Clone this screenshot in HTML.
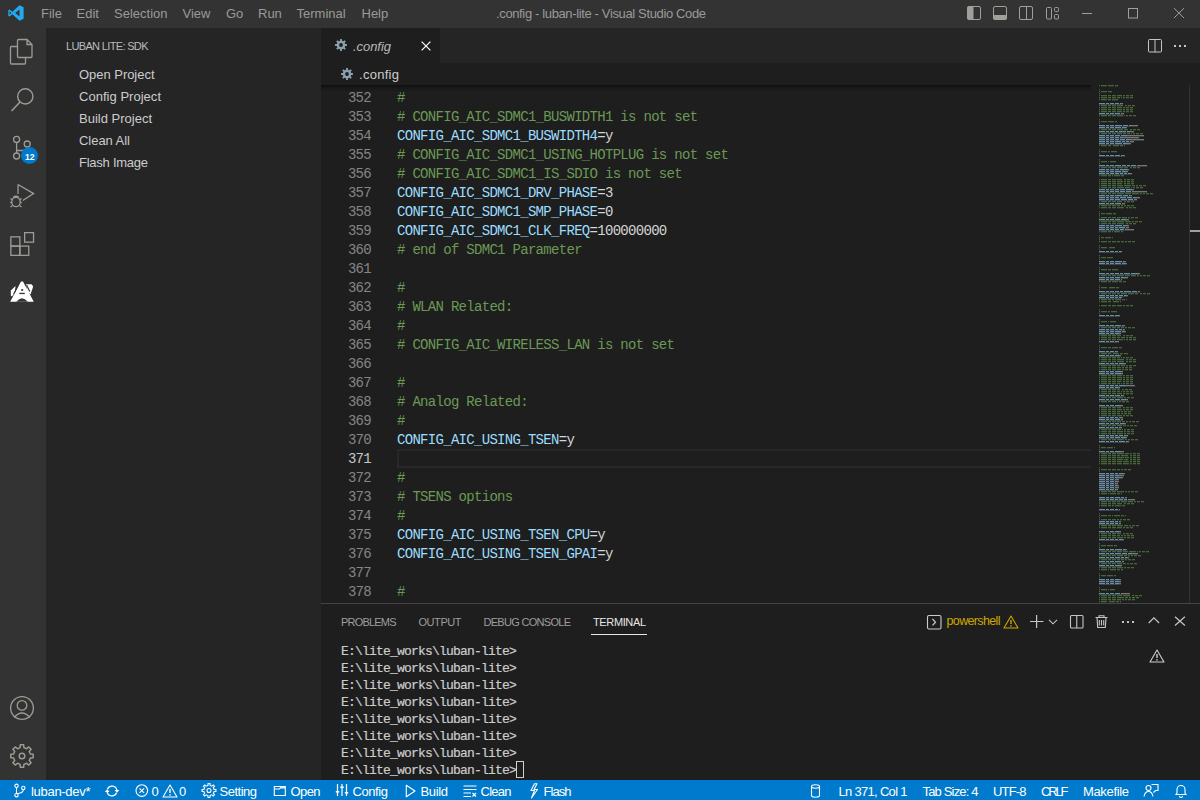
<!DOCTYPE html>
<html><head><meta charset="utf-8">
<style>
*{margin:0;padding:0;box-sizing:border-box}
html,body{width:1200px;height:800px;overflow:hidden;background:#1e1e1e;font-family:"Liberation Sans",sans-serif}
.abs{position:absolute}
.t{position:absolute;white-space:pre;line-height:1}
svg{position:absolute;overflow:visible}
.ln{position:absolute;left:0;width:50px;text-align:right;font-family:"Liberation Mono",monospace;font-size:14px;line-height:19px;color:#858585;letter-spacing:-0.7px}
.code{position:absolute;left:76px;font-family:"Liberation Mono",monospace;font-size:14px;line-height:19px;color:#d4d4d4;letter-spacing:-0.7px;white-space:pre}
.c{color:#6a9955}.k{color:#9cdcfe}
.term{position:absolute;left:20px;font-family:"Liberation Mono",monospace;font-size:13px;line-height:17px;color:#cccccc;letter-spacing:-0.8px;white-space:pre;-webkit-text-stroke:0.2px #cccccc}
</style></head><body>
<div class="abs" style="left:0;top:0;width:1200px;height:28px;background:#333333"></div>
<div class="abs" style="left:0;top:28px;width:46px;height:752px;background:#333333"></div>
<div class="abs" style="left:46px;top:28px;width:275px;height:752px;background:#252526"></div>
<div class="abs" style="left:321px;top:28px;width:879px;height:35px;background:#252526"></div>
<div class="abs" style="left:321px;top:28px;width:119px;height:35px;background:#1e1e1e"></div>
<div class="abs" style="left:0;top:780px;width:1200px;height:20px;background:#007acc"></div>
<svg style="left:8px;top:5px" width="16" height="16" viewBox="0 0 16 16">
<path d="M11.5 0.3 L15.6 2.2 V13.8 L11.5 15.7 L4.4 9.3 L1.6 11.4 L0.3 10.7 V5.3 L1.6 4.6 L4.4 6.7 Z M11.5 4.4 L7.2 8 L11.5 11.6 Z M1.6 6.3 V9.7 L3.4 8 Z" fill="#23a9f2" fill-rule="evenodd"/>
</svg>
<div id="m_File" class="t" style="left:41px;top:7px;font-size:13px;color:#9a9a9a;font-family:'Liberation Sans',sans-serif;letter-spacing:0.000px;">File</div>
<div id="m_Edit" class="t" style="left:76.5px;top:7px;font-size:13px;color:#9a9a9a;font-family:'Liberation Sans',sans-serif;letter-spacing:0.000px;">Edit</div>
<div id="m_Selection" class="t" style="left:114px;top:7px;font-size:13px;color:#9a9a9a;font-family:'Liberation Sans',sans-serif;letter-spacing:0.000px;">Selection</div>
<div id="m_View" class="t" style="left:182.5px;top:7px;font-size:13px;color:#9a9a9a;font-family:'Liberation Sans',sans-serif;letter-spacing:0.000px;">View</div>
<div id="m_Go" class="t" style="left:226px;top:7px;font-size:13px;color:#9a9a9a;font-family:'Liberation Sans',sans-serif;letter-spacing:0.000px;">Go</div>
<div id="m_Run" class="t" style="left:258px;top:7px;font-size:13px;color:#9a9a9a;font-family:'Liberation Sans',sans-serif;letter-spacing:0.000px;">Run</div>
<div id="m_Terminal" class="t" style="left:296.5px;top:7px;font-size:13px;color:#9a9a9a;font-family:'Liberation Sans',sans-serif;letter-spacing:0.000px;">Terminal</div>
<div id="m_Help" class="t" style="left:361.5px;top:7px;font-size:13px;color:#9a9a9a;font-family:'Liberation Sans',sans-serif;letter-spacing:0.000px;">Help</div>
<div id="title" class="t" style="left:496px;top:7px;font-size:13px;color:#9a9a9a;font-family:'Liberation Sans',sans-serif;letter-spacing:-0.362px;">.config - luban-lite - Visual Studio Code</div>
<svg style="left:966px;top:6px" width="16" height="15" viewBox="0 0 16 15">
<rect x="1.5" y="0.5" width="13" height="13" rx="1.5" fill="none" stroke="#a0a09a" stroke-width="1"/>
<rect x="1.5" y="0.5" width="6" height="13" fill="#a0a09a"/>
</svg>
<svg style="left:992px;top:6px" width="16" height="15" viewBox="0 0 16 15">
<rect x="1.5" y="0.5" width="13" height="13" rx="1.5" fill="none" stroke="#a0a09a" stroke-width="1"/>
<rect x="1.5" y="9" width="13" height="4.5" fill="#a0a09a"/>
</svg>
<svg style="left:1018px;top:6px" width="16" height="15" viewBox="0 0 16 15">
<rect x="1.5" y="0.5" width="13" height="13" rx="1.5" fill="none" stroke="#a0a09a" stroke-width="1"/>
<line x1="8.5" y1="0.5" x2="8.5" y2="13.5" stroke="#a0a09a" stroke-width="1"/>
</svg>
<svg style="left:1044px;top:6px" width="16" height="15" viewBox="0 0 16 15">
<rect x="2.5" y="1.5" width="5" height="11.5" rx="1" fill="none" stroke="#a0a09a" stroke-width="1"/>
<rect x="10.5" y="1.5" width="4" height="4" rx="1" fill="none" stroke="#a0a09a" stroke-width="1"/>
<rect x="10.5" y="8.5" width="4" height="4.5" rx="1" fill="none" stroke="#a0a09a" stroke-width="1"/>
</svg>
<svg style="left:1080px;top:8px" width="14" height="12" viewBox="0 0 14 12">
<line x1="2" y1="5.5" x2="12" y2="5.5" stroke="#a0a09a" stroke-width="1"/>
</svg>
<svg style="left:1127px;top:7px" width="12" height="12" viewBox="0 0 12 12">
<rect x="1.5" y="1.5" width="9" height="9.5" fill="none" stroke="#a0a09a" stroke-width="1"/>
</svg>
<svg style="left:1173px;top:7px" width="12" height="12" viewBox="0 0 12 12">
<path d="M1 1.2 L11 11 M11 1.2 L1 11" stroke="#a0a09a" stroke-width="1"/>
</svg>
<svg style="left:0;top:28px" width="46" height="752" viewBox="0 0 46 752">
<g fill="none" stroke="#9c9c94" stroke-width="1.3">
<path d="M17 18.5 H11.5 a1 1 0 0 0 -1 1 V35 a1 1 0 0 0 1 1 H24.5 a1 1 0 0 0 1 -1 V29.5"/>
<path d="M17.5 12.5 a1 1 0 0 1 1 -1 H27 L32 16.5 V28.5 a1 1 0 0 1 -1 1 H18.5 a1 1 0 0 1 -1 -1 Z M27 11.5 V16.5 H32"/>
<circle cx="25.3" cy="68.4" r="7.6" stroke-width="1.4"/>
<path d="M20 74 L11.5 83" stroke-width="1.6"/>
<circle cx="16.6" cy="111.4" r="3"/>
<circle cx="27.2" cy="116" r="3"/>
<circle cx="16.6" cy="128" r="3"/>
<path d="M16.6 114.4 V125 M27.2 119 q0 3.5 -4 3.5 H16.6"/>
<path d="M18 156.5 L33.6 165.6 L22.8 172.5 M18 156.5 V166"/>
<ellipse cx="16" cy="174" rx="4.2" ry="4.6"/><path d="M13 169.5 q3 -2.5 6 0 M10.5 170.5 l2 1.5 M21.5 170.5 l-2 1.5 M10.2 174.5 h1.6 M20.2 174.5 h1.6 M10.5 179 l2 -1.5 M21.5 179 l-2 -1.5"/>
<rect x="10.85" y="208.85" width="9" height="9.25"/>
<rect x="10.85" y="218.1" width="9" height="9.25"/>
<rect x="19.85" y="218.1" width="8.9" height="9.25"/>
<rect x="24.65" y="204.65" width="8.9" height="9.5"/>
<circle cx="22" cy="680" r="11.4"/>
<circle cx="22" cy="677.4" r="4.8"/>
<path d="M14 689.5 q8 -9 16 0"/>
</g>
</svg>
<svg style="left:0;top:728px" width="46" height="52" viewBox="0 0 46 52">
<path d="M30.38 26.07 L33.18 26.34 L33.18 29.66 L30.38 29.93 L29.29 32.57 L31.08 34.73 L28.73 37.08 L26.57 35.29 L23.93 36.38 L23.66 39.18 L20.34 39.18 L20.07 36.38 L17.43 35.29 L15.27 37.08 L12.92 34.73 L14.71 32.57 L13.62 29.93 L10.82 29.66 L10.82 26.34 L13.62 26.07 L14.71 23.43 L12.92 21.27 L15.27 18.92 L17.43 20.71 L20.07 19.62 L20.34 16.82 L23.66 16.82 L23.93 19.62 L26.57 20.71 L28.73 18.92 L31.08 21.27 L29.29 23.43 Z" fill="none" stroke="#9c9c94" stroke-width="1.5" stroke-linejoin="round"/>
<circle cx="22" cy="28" r="2.8" fill="none" stroke="#9c9c94" stroke-width="1.4"/>
</svg>
<div class="abs" style="left:21px;top:147.4px;width:17px;height:17px;border-radius:50%;background:#007acc"></div>
<div id="badge" class="t" style="left:25px;top:152.6px;font-size:8.6px;color:#ffffff;font-family:'Liberation Sans',sans-serif;letter-spacing:0.000px;font-weight:bold">12</div>
<svg style="left:0;top:270px" width="46" height="40" viewBox="0 270 46 40">
<path d="M21 281.5 L23 281.5 L33.8 301.8 L10.2 301.8 Z" fill="#ffffff"/>
<path d="M15.6 286 L10.8 290.5 L10.9 296.5 L14.5 294.5 Z" fill="#ffffff"/>
<path d="M26 284.3 L31.5 284.2 L33.2 286.5 L30.5 294.5 L27.5 291.5 Z" fill="#ffffff"/>
<path d="M16.2 301.8 Q22 294.5 27.8 301.8 Z" fill="#333333"/>
<circle cx="22.2" cy="290" r="1.1" fill="#333333"/>
<rect x="19.3" y="292.8" width="5.5" height="1.3" fill="#333333"/>
<path d="M13.5 294.5 L17.8 285.8" stroke="#333333" stroke-width="1.2"/>
<path d="M26.5 285 L29.8 291.5" stroke="#333333" stroke-width="1.2"/>
</svg>
<div id="sidehdr" class="t" style="left:66px;top:41px;font-size:11px;color:#bbbbbb;font-family:'Liberation Sans',sans-serif;letter-spacing:-0.657px;">LUBAN LITE: SDK</div>
<div id="side0" class="t" style="left:79px;top:68px;font-size:13px;color:#cccccc;font-family:'Liberation Sans',sans-serif;letter-spacing:-0.034px;">Open Project</div>
<div id="side1" class="t" style="left:79px;top:90px;font-size:13px;color:#cccccc;font-family:'Liberation Sans',sans-serif;letter-spacing:0.027px;">Config Project</div>
<div id="side2" class="t" style="left:79px;top:112px;font-size:13px;color:#cccccc;font-family:'Liberation Sans',sans-serif;letter-spacing:0.001px;">Build Project</div>
<div id="side3" class="t" style="left:79px;top:134px;font-size:13px;color:#cccccc;font-family:'Liberation Sans',sans-serif;letter-spacing:-0.040px;">Clean All</div>
<div id="side4" class="t" style="left:79px;top:156px;font-size:13px;color:#cccccc;font-family:'Liberation Sans',sans-serif;letter-spacing:-0.254px;">Flash Image</div>
<svg style="left:335px;top:39px" width="12" height="12" viewBox="0 0 12 12">
<path d="M10.19 5.04 L11.94 5.12 L11.94 6.88 L10.19 6.96 L9.64 8.28 L10.82 9.57 L9.57 10.82 L8.28 9.64 L6.96 10.19 L6.88 11.94 L5.12 11.94 L5.04 10.19 L3.72 9.64 L2.43 10.82 L1.18 9.57 L2.36 8.28 L1.81 6.96 L0.06 6.88 L0.06 5.12 L1.81 5.04 L2.36 3.72 L1.18 2.43 L2.43 1.18 L3.72 2.36 L5.04 1.81 L5.12 0.06 L6.88 0.06 L6.96 1.81 L8.28 2.36 L9.57 1.18 L10.82 2.43 L9.64 3.72 Z" fill="#8aa0ae"/><circle cx="6" cy="6" r="1.9" fill="#1e1e1e"/></svg>
<div id="tabname" class="t" style="left:353px;top:40px;font-size:13px;color:#b8b8b8;font-family:'Liberation Sans',sans-serif;letter-spacing:-0.052px;font-style:italic">.config</div>
<svg style="left:421px;top:41px" width="10" height="10" viewBox="0 0 10 10">
<path d="M0.6 0.6 L9.4 9.4 M9.4 0.6 L0.6 9.4" stroke="#ffffff" stroke-width="1.2"/></svg>
<svg style="left:1147px;top:38px" width="15" height="15" viewBox="0 0 15 15">
<rect x="1.5" y="1.5" width="13" height="12.5" rx="1" fill="none" stroke="#c5c5c5" stroke-width="1"/>
<line x1="8" y1="1.5" x2="8" y2="14" stroke="#c5c5c5" stroke-width="1"/></svg>
<div class="abs" style="left:1174px;top:45px;width:2px;height:2px;background:#c5c5c5"></div>
<div class="abs" style="left:1179px;top:45px;width:2px;height:2px;background:#c5c5c5"></div>
<div class="abs" style="left:1184px;top:45px;width:2px;height:2px;background:#c5c5c5"></div>
<svg style="left:341px;top:68px" width="12" height="12" viewBox="0 0 12 12">
<path d="M10.19 5.04 L11.94 5.12 L11.94 6.88 L10.19 6.96 L9.64 8.28 L10.82 9.57 L9.57 10.82 L8.28 9.64 L6.96 10.19 L6.88 11.94 L5.12 11.94 L5.04 10.19 L3.72 9.64 L2.43 10.82 L1.18 9.57 L2.36 8.28 L1.81 6.96 L0.06 6.88 L0.06 5.12 L1.81 5.04 L2.36 3.72 L1.18 2.43 L2.43 1.18 L3.72 2.36 L5.04 1.81 L5.12 0.06 L6.88 0.06 L6.96 1.81 L8.28 2.36 L9.57 1.18 L10.82 2.43 L9.64 3.72 Z" fill="#8aa0ae"/><circle cx="6" cy="6" r="1.9" fill="#1e1e1e"/></svg>
<div id="crumbname" class="t" style="left:359px;top:68px;font-size:13px;color:#cccccc;font-family:'Liberation Sans',sans-serif;letter-spacing:0.281px;">.config</div>
<div class="abs" style="left:321px;top:85px;width:879px;height:518px;overflow:hidden">

<div class="abs" style="left:76px;top:364px;width:694px;height:19px;border:2px solid #282828;border-right:none"></div>

<div class="ln" style="top:4px">352</div>
<div class="code" style="top:4px"><span class="c">#</span></div>
<div class="ln" style="top:23px">353</div>
<div class="code" style="top:23px"><span class="c"># CONFIG_AIC_SDMC1_BUSWIDTH1 is not set</span></div>
<div class="ln" style="top:42px">354</div>
<div class="code" style="top:42px"><span class="k">CONFIG_AIC_SDMC1_BUSWIDTH4</span>=y</div>
<div class="ln" style="top:61px">355</div>
<div class="code" style="top:61px"><span class="c"># CONFIG_AIC_SDMC1_USING_HOTPLUG is not set</span></div>
<div class="ln" style="top:80px">356</div>
<div class="code" style="top:80px"><span class="c"># CONFIG_AIC_SDMC1_IS_SDIO is not set</span></div>
<div class="ln" style="top:99px">357</div>
<div class="code" style="top:99px"><span class="k">CONFIG_AIC_SDMC1_DRV_PHASE</span>=3</div>
<div class="ln" style="top:118px">358</div>
<div class="code" style="top:118px"><span class="k">CONFIG_AIC_SDMC1_SMP_PHASE</span>=0</div>
<div class="ln" style="top:137px">359</div>
<div class="code" style="top:137px"><span class="k">CONFIG_AIC_SDMC1_CLK_FREQ</span>=100000000</div>
<div class="ln" style="top:156px">360</div>
<div class="code" style="top:156px"><span class="c"># end of SDMC1 Parameter</span></div>
<div class="ln" style="top:175px">361</div>
<div class="ln" style="top:194px">362</div>
<div class="code" style="top:194px"><span class="c">#</span></div>
<div class="ln" style="top:213px">363</div>
<div class="code" style="top:213px"><span class="c"># WLAN Related:</span></div>
<div class="ln" style="top:232px">364</div>
<div class="code" style="top:232px"><span class="c">#</span></div>
<div class="ln" style="top:251px">365</div>
<div class="code" style="top:251px"><span class="c"># CONFIG_AIC_WIRELESS_LAN is not set</span></div>
<div class="ln" style="top:270px">366</div>
<div class="ln" style="top:289px">367</div>
<div class="code" style="top:289px"><span class="c">#</span></div>
<div class="ln" style="top:308px">368</div>
<div class="code" style="top:308px"><span class="c"># Analog Related:</span></div>
<div class="ln" style="top:327px">369</div>
<div class="code" style="top:327px"><span class="c">#</span></div>
<div class="ln" style="top:346px">370</div>
<div class="code" style="top:346px"><span class="k">CONFIG_AIC_USING_TSEN</span>=y</div>
<div class="ln" style="top:365px;color:#c6c6c6">371</div>
<div class="ln" style="top:384px">372</div>
<div class="code" style="top:384px"><span class="c">#</span></div>
<div class="ln" style="top:403px">373</div>
<div class="code" style="top:403px"><span class="c"># TSENS options</span></div>
<div class="ln" style="top:422px">374</div>
<div class="code" style="top:422px"><span class="c">#</span></div>
<div class="ln" style="top:441px">375</div>
<div class="code" style="top:441px"><span class="k">CONFIG_AIC_USING_TSEN_CPU</span>=y</div>
<div class="ln" style="top:460px">376</div>
<div class="code" style="top:460px"><span class="k">CONFIG_AIC_USING_TSEN_GPAI</span>=y</div>
<div class="ln" style="top:479px">377</div>
<div class="ln" style="top:498px">378</div>
<div class="code" style="top:498px"><span class="c">#</span></div>

<div class="abs" style="left:0;top:0;width:770px;height:6px;box-shadow:inset 0 6px 6px -6px #000"></div>

</div>
<svg style="left:0;top:0" width="1200" height="800" viewBox="0 0 1200 800" shape-rendering="crispEdges">
<path d="M1099 85h1v1h-1zM1101 85h6v1h-6zM1108 85h6v1h-6zM1115 85h3v1h-3zM1099 89h1v1h-1zM1099 91h1v1h-1zM1101 91h6v1h-6zM1108 91h4v1h-4zM1099 93h1v1h-1zM1099 95h1v1h-1zM1101 95h6v1h-6zM1108 95h3v1h-3zM1112 95h4v1h-4zM1117 95h5v1h-5zM1123 95h2v1h-2zM1126 95h3v1h-3zM1130 95h3v1h-3zM1099 97h1v1h-1zM1101 97h6v1h-6zM1108 97h3v1h-3zM1112 97h4v1h-4zM1117 97h3v1h-3zM1121 97h1v1h-1zM1123 97h2v1h-2zM1126 97h3v1h-3zM1130 97h3v1h-3zM1099 99h1v1h-1zM1101 99h6v1h-6zM1108 99h3v1h-3zM1112 99h6v1h-6zM1099 105h1v1h-1zM1101 105h6v1h-6zM1108 105h3v1h-3zM1112 105h4v1h-4zM1117 105h6v1h-6zM1125 105h2v1h-2zM1128 105h3v1h-3zM1132 105h3v1h-3zM1099 107h1v1h-1zM1101 107h6v1h-6zM1108 107h3v1h-3zM1112 107h4v1h-4zM1117 107h5v1h-5zM1123 107h2v1h-2zM1126 107h3v1h-3zM1130 107h3v1h-3zM1099 109h1v1h-1zM1101 109h6v1h-6zM1108 109h3v1h-3zM1112 109h4v1h-4zM1117 109h5v1h-5zM1123 109h2v1h-2zM1126 109h3v1h-3zM1130 109h3v1h-3zM1099 111h1v1h-1zM1101 111h6v1h-6zM1108 111h3v1h-3zM1112 111h4v1h-4zM1117 111h5v1h-5zM1123 111h2v1h-2zM1126 111h3v1h-3zM1130 111h3v1h-3zM1099 115h1v1h-1zM1101 115h6v1h-6zM1108 115h3v1h-3zM1112 115h4v1h-4zM1117 115h6v1h-6zM1124 115h1v1h-1zM1126 115h2v1h-2zM1129 115h3v1h-3zM1133 115h3v1h-3zM1099 119h1v1h-1zM1099 121h1v1h-1zM1101 121h6v1h-6zM1108 121h6v1h-6zM1115 121h2v1h-2zM1099 123h1v1h-1zM1099 129h1v1h-1zM1101 129h6v1h-6zM1108 129h3v1h-3zM1112 129h4v1h-4zM1117 129h6v1h-6zM1124 129h4v1h-4zM1130 129h2v1h-2zM1133 129h3v1h-3zM1137 129h3v1h-3zM1099 133h1v1h-1zM1101 133h6v1h-6zM1108 133h3v1h-3zM1112 133h4v1h-4zM1117 133h5v1h-5zM1123 133h3v1h-3zM1127 133h3v1h-3zM1131 133h1v1h-1zM1133 133h2v1h-2zM1136 133h3v1h-3zM1140 133h3v1h-3zM1099 145h1v1h-1zM1101 145h6v1h-6zM1108 145h3v1h-3zM1113 145h6v1h-6zM1120 145h3v1h-3zM1124 145h1v1h-1zM1099 149h1v1h-1zM1099 151h1v1h-1zM1101 151h6v1h-6zM1108 151h2v1h-2zM1111 151h6v1h-6zM1099 153h1v1h-1zM1099 159h1v1h-1zM1099 161h1v1h-1zM1101 161h6v1h-6zM1108 161h1v1h-1zM1110 161h6v1h-6zM1099 163h1v1h-1zM1099 167h1v1h-1zM1101 167h6v1h-6zM1108 167h3v1h-3zM1112 167h4v1h-4zM1117 167h6v1h-6zM1124 167h4v1h-4zM1130 167h2v1h-2zM1133 167h3v1h-3zM1137 167h3v1h-3zM1099 175h1v1h-1zM1101 175h6v1h-6zM1108 175h3v1h-3zM1112 175h1v1h-1zM1114 175h6v1h-6zM1121 175h3v1h-3zM1099 179h1v1h-1zM1101 179h6v1h-6zM1108 179h3v1h-3zM1112 179h4v1h-4zM1117 179h5v1h-5zM1124 179h2v1h-2zM1127 179h3v1h-3zM1131 179h3v1h-3zM1099 181h1v1h-1zM1101 181h6v1h-6zM1108 181h3v1h-3zM1112 181h4v1h-4zM1117 181h6v1h-6zM1124 181h2v1h-2zM1127 181h3v1h-3zM1131 181h3v1h-3zM1099 183h1v1h-1zM1101 183h6v1h-6zM1108 183h3v1h-3zM1112 183h4v1h-4zM1117 183h5v1h-5zM1124 183h2v1h-2zM1127 183h3v1h-3zM1131 183h3v1h-3zM1099 185h1v1h-1zM1101 185h6v1h-6zM1108 185h3v1h-3zM1112 185h4v1h-4zM1117 185h6v1h-6zM1124 185h7v1h-7zM1132 185h3v1h-3zM1136 185h2v1h-2zM1139 185h3v1h-3zM1143 185h3v1h-3zM1099 187h1v1h-1zM1101 187h6v1h-6zM1108 187h3v1h-3zM1112 187h4v1h-4zM1117 187h7v1h-7zM1125 187h5v1h-5zM1131 187h1v1h-1zM1133 187h2v1h-2zM1136 187h3v1h-3zM1140 187h3v1h-3zM1099 193h1v1h-1zM1101 193h6v1h-6zM1108 193h3v1h-3zM1112 193h4v1h-4zM1117 193h7v1h-7zM1125 193h6v1h-6zM1132 193h7v1h-7zM1140 193h2v1h-2zM1143 193h2v1h-2zM1146 193h3v1h-3zM1150 193h3v1h-3zM1099 201h1v1h-1zM1101 201h6v1h-6zM1108 201h3v1h-3zM1112 201h4v1h-4zM1117 201h5v1h-5zM1124 201h2v1h-2zM1127 201h3v1h-3zM1131 201h3v1h-3zM1099 205h1v1h-1zM1101 205h6v1h-6zM1108 205h3v1h-3zM1112 205h4v1h-4zM1117 205h3v1h-3zM1121 205h2v1h-2zM1124 205h2v1h-2zM1127 205h3v1h-3zM1131 205h3v1h-3zM1099 207h1v1h-1zM1101 207h6v1h-6zM1108 207h3v1h-3zM1112 207h4v1h-4zM1117 207h7v1h-7zM1126 207h2v1h-2zM1129 207h3v1h-3zM1133 207h3v1h-3zM1099 211h1v1h-1zM1099 213h1v1h-1zM1101 213h4v1h-4zM1106 213h6v1h-6zM1113 213h3v1h-3zM1099 215h1v1h-1zM1099 217h1v1h-1zM1101 217h6v1h-6zM1108 217h3v1h-3zM1112 217h4v1h-4zM1117 217h4v1h-4zM1122 217h5v1h-5zM1128 217h2v1h-2zM1131 217h3v1h-3zM1135 217h3v1h-3zM1099 221h1v1h-1zM1101 221h6v1h-6zM1108 221h3v1h-3zM1112 221h4v1h-4zM1117 221h7v1h-7zM1125 221h6v1h-6zM1132 221h2v1h-2zM1135 221h3v1h-3zM1139 221h3v1h-3zM1099 223h1v1h-1zM1101 223h6v1h-6zM1108 223h3v1h-3zM1112 223h4v1h-4zM1117 223h7v1h-7zM1126 223h2v1h-2zM1129 223h3v1h-3zM1133 223h3v1h-3zM1099 231h1v1h-1zM1101 231h6v1h-6zM1108 231h3v1h-3zM1112 231h1v1h-1zM1114 231h6v1h-6zM1121 231h2v1h-2zM1099 235h1v1h-1zM1099 237h1v1h-1zM1101 237h3v1h-3zM1105 237h6v1h-6zM1112 237h1v1h-1zM1099 239h1v1h-1zM1099 241h1v1h-1zM1101 241h6v1h-6zM1108 241h3v1h-3zM1112 241h4v1h-4zM1117 241h3v1h-3zM1121 241h3v1h-3zM1125 241h2v1h-2zM1128 241h3v1h-3zM1132 241h3v1h-3zM1099 245h1v1h-1zM1099 247h1v1h-1zM1101 247h6v1h-6zM1109 247h6v1h-6zM1099 249h1v1h-1zM1099 255h1v1h-1zM1099 257h1v1h-1zM1101 257h5v1h-5zM1107 257h6v1h-6zM1099 259h1v1h-1zM1099 267h1v1h-1zM1099 269h1v1h-1zM1101 269h6v1h-6zM1108 269h3v1h-3zM1112 269h6v1h-6zM1099 271h1v1h-1zM1099 275h1v1h-1zM1101 275h6v1h-6zM1108 275h3v1h-3zM1112 275h4v1h-4zM1117 275h7v1h-7zM1125 275h5v1h-5zM1131 275h5v1h-5zM1137 275h2v1h-2zM1140 275h2v1h-2zM1143 275h3v1h-3zM1147 275h3v1h-3zM1099 281h1v1h-1zM1101 281h6v1h-6zM1108 281h3v1h-3zM1112 281h6v1h-6zM1119 281h3v1h-3zM1123 281h3v1h-3zM1099 285h1v1h-1zM1099 287h1v1h-1zM1101 287h6v1h-6zM1109 287h6v1h-6zM1116 287h3v1h-3zM1099 289h1v1h-1zM1099 293h1v1h-1zM1101 293h6v1h-6zM1108 293h3v1h-3zM1112 293h4v1h-4zM1117 293h3v1h-3zM1121 293h6v1h-6zM1128 293h6v1h-6zM1135 293h3v1h-3zM1140 293h2v1h-2zM1143 293h3v1h-3zM1147 293h3v1h-3zM1099 299h1v1h-1zM1101 299h6v1h-6zM1108 299h3v1h-3zM1112 299h2v1h-2zM1115 299h6v1h-6zM1122 299h3v1h-3zM1126 299h1v1h-1zM1099 301h1v1h-1zM1101 301h6v1h-6zM1108 301h3v1h-3zM1113 301h6v1h-6zM1120 301h1v1h-1zM1099 305h1v1h-1zM1101 305h6v1h-6zM1108 305h3v1h-3zM1112 305h4v1h-4zM1117 305h5v1h-5zM1123 305h2v1h-2zM1126 305h3v1h-3zM1130 305h3v1h-3zM1099 309h1v1h-1zM1099 311h1v1h-1zM1101 311h6v1h-6zM1108 311h2v1h-2zM1111 311h6v1h-6zM1099 313h1v1h-1zM1099 319h1v1h-1zM1099 321h1v1h-1zM1101 321h6v1h-6zM1108 321h1v1h-1zM1110 321h6v1h-6zM1099 323h1v1h-1zM1099 327h1v1h-1zM1101 327h6v1h-6zM1108 327h3v1h-3zM1112 327h4v1h-4zM1117 327h3v1h-3zM1121 327h3v1h-3zM1125 327h2v1h-2zM1128 327h3v1h-3zM1132 327h3v1h-3zM1099 335h1v1h-1zM1101 335h6v1h-6zM1108 335h3v1h-3zM1112 335h4v1h-4zM1117 335h4v1h-4zM1123 335h2v1h-2zM1126 335h3v1h-3zM1130 335h3v1h-3zM1099 337h1v1h-1zM1101 337h6v1h-6zM1108 337h3v1h-3zM1112 337h4v1h-4zM1117 337h3v1h-3zM1121 337h4v1h-4zM1126 337h2v1h-2zM1129 337h3v1h-3zM1133 337h3v1h-3zM1099 339h1v1h-1zM1101 339h6v1h-6zM1108 339h3v1h-3zM1112 339h4v1h-4zM1117 339h6v1h-6zM1124 339h1v1h-1zM1126 339h2v1h-2zM1129 339h3v1h-3zM1133 339h3v1h-3zM1099 345h1v1h-1zM1099 347h1v1h-1zM1101 347h6v1h-6zM1108 347h3v1h-3zM1112 347h6v1h-6zM1119 347h3v1h-3zM1099 349h1v1h-1zM1099 353h1v1h-1zM1101 353h6v1h-6zM1108 353h3v1h-3zM1113 353h6v1h-6zM1120 353h3v1h-3zM1124 353h4v1h-4zM1099 357h1v1h-1zM1101 357h6v1h-6zM1108 357h3v1h-3zM1112 357h4v1h-4zM1117 357h3v1h-3zM1121 357h1v1h-1zM1123 357h2v1h-2zM1126 357h3v1h-3zM1130 357h3v1h-3zM1099 359h1v1h-1zM1101 359h6v1h-6zM1108 359h3v1h-3zM1112 359h4v1h-4zM1117 359h7v1h-7zM1126 359h2v1h-2zM1129 359h3v1h-3zM1133 359h3v1h-3zM1099 361h1v1h-1zM1101 361h6v1h-6zM1108 361h3v1h-3zM1112 361h4v1h-4zM1117 361h7v1h-7zM1126 361h2v1h-2zM1129 361h3v1h-3zM1133 361h3v1h-3zM1099 365h1v1h-1zM1101 365h6v1h-6zM1108 365h3v1h-3zM1112 365h4v1h-4zM1117 365h3v1h-3zM1121 365h4v1h-4zM1126 365h2v1h-2zM1129 365h3v1h-3zM1133 365h3v1h-3zM1099 367h1v1h-1zM1101 367h6v1h-6zM1108 367h3v1h-3zM1112 367h4v1h-4zM1117 367h4v1h-4zM1122 367h2v1h-2zM1125 367h3v1h-3zM1129 367h3v1h-3zM1099 369h1v1h-1zM1101 369h6v1h-6zM1108 369h3v1h-3zM1112 369h4v1h-4zM1117 369h4v1h-4zM1122 369h2v1h-2zM1125 369h3v1h-3zM1129 369h3v1h-3zM1099 375h1v1h-1zM1101 375h6v1h-6zM1108 375h3v1h-3zM1112 375h4v1h-4zM1117 375h5v1h-5zM1123 375h2v1h-2zM1126 375h3v1h-3zM1130 375h3v1h-3zM1099 377h1v1h-1zM1101 377h6v1h-6zM1108 377h3v1h-3zM1112 377h4v1h-4zM1117 377h5v1h-5zM1123 377h2v1h-2zM1126 377h3v1h-3zM1130 377h3v1h-3zM1099 379h1v1h-1zM1101 379h6v1h-6zM1108 379h3v1h-3zM1112 379h4v1h-4zM1117 379h5v1h-5zM1123 379h2v1h-2zM1126 379h3v1h-3zM1130 379h3v1h-3zM1099 381h1v1h-1zM1101 381h6v1h-6zM1108 381h3v1h-3zM1112 381h4v1h-4zM1117 381h4v1h-4zM1123 381h2v1h-2zM1126 381h3v1h-3zM1130 381h3v1h-3zM1099 383h1v1h-1zM1101 383h6v1h-6zM1108 383h3v1h-3zM1112 383h4v1h-4zM1117 383h3v1h-3zM1121 383h1v1h-1zM1123 383h2v1h-2zM1126 383h3v1h-3zM1130 383h3v1h-3zM1099 389h1v1h-1zM1101 389h6v1h-6zM1108 389h3v1h-3zM1112 389h4v1h-4zM1117 389h3v1h-3zM1122 389h2v1h-2zM1125 389h3v1h-3zM1129 389h3v1h-3zM1099 391h1v1h-1zM1101 391h6v1h-6zM1108 391h3v1h-3zM1112 391h4v1h-4zM1117 391h3v1h-3zM1121 391h1v1h-1zM1123 391h2v1h-2zM1126 391h3v1h-3zM1130 391h3v1h-3zM1099 393h1v1h-1zM1101 393h6v1h-6zM1108 393h3v1h-3zM1112 393h4v1h-4zM1117 393h5v1h-5zM1123 393h2v1h-2zM1126 393h3v1h-3zM1130 393h3v1h-3zM1099 397h1v1h-1zM1101 397h6v1h-6zM1108 397h3v1h-3zM1112 397h4v1h-4zM1117 397h6v1h-6zM1124 397h2v1h-2zM1127 397h3v1h-3zM1131 397h3v1h-3zM1099 401h1v1h-1zM1101 401h6v1h-6zM1108 401h3v1h-3zM1112 401h4v1h-4zM1117 401h1v1h-1zM1119 401h2v1h-2zM1122 401h3v1h-3zM1126 401h3v1h-3zM1099 407h1v1h-1zM1101 407h6v1h-6zM1108 407h3v1h-3zM1112 407h4v1h-4zM1117 407h4v1h-4zM1123 407h2v1h-2zM1126 407h3v1h-3zM1130 407h3v1h-3zM1099 409h1v1h-1zM1101 409h6v1h-6zM1108 409h3v1h-3zM1112 409h4v1h-4zM1117 409h5v1h-5zM1123 409h2v1h-2zM1126 409h3v1h-3zM1130 409h3v1h-3zM1099 411h1v1h-1zM1101 411h6v1h-6zM1108 411h3v1h-3zM1112 411h4v1h-4zM1117 411h3v1h-3zM1121 411h2v1h-2zM1124 411h3v1h-3zM1128 411h3v1h-3zM1099 413h1v1h-1zM1101 413h6v1h-6zM1108 413h3v1h-3zM1112 413h4v1h-4zM1117 413h3v1h-3zM1121 413h2v1h-2zM1124 413h3v1h-3zM1128 413h3v1h-3zM1099 415h1v1h-1zM1101 415h6v1h-6zM1108 415h3v1h-3zM1112 415h4v1h-4zM1117 415h5v1h-5zM1123 415h2v1h-2zM1126 415h3v1h-3zM1130 415h3v1h-3zM1099 421h1v1h-1zM1101 421h6v1h-6zM1108 421h3v1h-3zM1112 421h4v1h-4zM1117 421h4v1h-4zM1122 421h3v1h-3zM1126 421h2v1h-2zM1129 421h2v1h-2zM1132 421h3v1h-3zM1136 421h3v1h-3zM1099 425h1v1h-1zM1101 425h6v1h-6zM1108 425h3v1h-3zM1112 425h4v1h-4zM1117 425h5v1h-5zM1123 425h3v1h-3zM1127 425h2v1h-2zM1130 425h3v1h-3zM1134 425h3v1h-3zM1099 429h1v1h-1zM1101 429h6v1h-6zM1108 429h3v1h-3zM1112 429h4v1h-4zM1117 429h4v1h-4zM1122 429h1v1h-1zM1124 429h2v1h-2zM1127 429h3v1h-3zM1131 429h3v1h-3zM1099 431h1v1h-1zM1101 431h6v1h-6zM1108 431h3v1h-3zM1112 431h4v1h-4zM1117 431h6v1h-6zM1124 431h2v1h-2zM1127 431h3v1h-3zM1131 431h3v1h-3zM1099 433h1v1h-1zM1101 433h6v1h-6zM1108 433h3v1h-3zM1112 433h4v1h-4zM1117 433h6v1h-6zM1124 433h2v1h-2zM1127 433h3v1h-3zM1131 433h3v1h-3zM1099 439h1v1h-1zM1101 439h6v1h-6zM1108 439h3v1h-3zM1112 439h4v1h-4zM1117 439h7v1h-7zM1125 439h2v1h-2zM1128 439h2v1h-2zM1131 439h3v1h-3zM1135 439h3v1h-3zM1099 445h1v1h-1zM1099 447h1v1h-1zM1101 447h5v1h-5zM1107 447h6v1h-6zM1114 447h1v1h-1zM1099 449h1v1h-1zM1099 453h1v1h-1zM1101 453h6v1h-6zM1108 453h3v1h-3zM1112 453h4v1h-4zM1117 453h7v1h-7zM1125 453h4v1h-4zM1130 453h2v1h-2zM1133 453h3v1h-3zM1137 453h3v1h-3zM1099 455h1v1h-1zM1101 455h6v1h-6zM1108 455h3v1h-3zM1112 455h4v1h-4zM1117 455h3v1h-3zM1121 455h7v1h-7zM1130 455h2v1h-2zM1133 455h3v1h-3zM1137 455h3v1h-3zM1099 457h1v1h-1zM1101 457h6v1h-6zM1108 457h3v1h-3zM1112 457h4v1h-4zM1117 457h7v1h-7zM1125 457h4v1h-4zM1130 457h2v1h-2zM1133 457h3v1h-3zM1137 457h3v1h-3zM1099 459h1v1h-1zM1101 459h6v1h-6zM1108 459h3v1h-3zM1112 459h4v1h-4zM1117 459h6v1h-6zM1124 459h4v1h-4zM1130 459h2v1h-2zM1133 459h3v1h-3zM1137 459h3v1h-3zM1099 461h1v1h-1zM1101 461h6v1h-6zM1108 461h3v1h-3zM1112 461h4v1h-4zM1117 461h5v1h-5zM1123 461h6v1h-6zM1130 461h2v1h-2zM1133 461h3v1h-3zM1137 461h3v1h-3zM1099 463h1v1h-1zM1101 463h6v1h-6zM1108 463h3v1h-3zM1112 463h4v1h-4zM1117 463h5v1h-5zM1123 463h6v1h-6zM1130 463h2v1h-2zM1133 463h3v1h-3zM1137 463h3v1h-3zM1099 467h1v1h-1zM1099 469h1v1h-1zM1101 469h6v1h-6zM1108 469h3v1h-3zM1112 469h4v1h-4zM1117 469h3v1h-3zM1121 469h2v1h-2zM1124 469h3v1h-3zM1128 469h3v1h-3zM1099 471h1v1h-1zM1099 491h1v1h-1zM1101 491h6v1h-6zM1108 491h3v1h-3zM1112 491h4v1h-4zM1117 491h7v1h-7zM1125 491h2v1h-2zM1128 491h2v1h-2zM1131 491h3v1h-3zM1135 491h3v1h-3zM1099 493h1v1h-1zM1101 493h6v1h-6zM1108 493h1v1h-1zM1110 493h6v1h-6zM1117 493h3v1h-3zM1121 493h1v1h-1zM1099 501h1v1h-1zM1101 501h6v1h-6zM1108 501h3v1h-3zM1112 501h4v1h-4zM1117 501h3v1h-3zM1121 501h6v1h-6zM1128 501h5v1h-5zM1134 501h2v1h-2zM1137 501h3v1h-3zM1141 501h3v1h-3zM1099 503h1v1h-1zM1101 503h6v1h-6zM1108 503h3v1h-3zM1112 503h4v1h-4zM1117 503h5v1h-5zM1124 503h2v1h-2zM1127 503h3v1h-3zM1131 503h3v1h-3zM1099 505h1v1h-1zM1101 505h6v1h-6zM1108 505h3v1h-3zM1112 505h2v1h-2zM1115 505h6v1h-6zM1122 505h3v1h-3zM1099 513h1v1h-1zM1099 515h1v1h-1zM1101 515h6v1h-6zM1108 515h3v1h-3zM1112 515h1v1h-1zM1114 515h6v1h-6zM1121 515h3v1h-3zM1125 515h1v1h-1zM1099 517h1v1h-1zM1099 519h1v1h-1zM1101 519h6v1h-6zM1108 519h3v1h-3zM1112 519h4v1h-4zM1117 519h2v1h-2zM1120 519h2v1h-2zM1123 519h3v1h-3zM1127 519h3v1h-3zM1099 525h1v1h-1zM1101 525h6v1h-6zM1108 525h3v1h-3zM1112 525h4v1h-4zM1117 525h6v1h-6zM1124 525h4v1h-4zM1129 525h2v1h-2zM1132 525h3v1h-3zM1136 525h3v1h-3zM1099 527h1v1h-1zM1101 527h6v1h-6zM1108 527h3v1h-3zM1112 527h4v1h-4zM1117 527h5v1h-5zM1123 527h2v1h-2zM1126 527h3v1h-3zM1130 527h3v1h-3zM1099 533h1v1h-1zM1101 533h6v1h-6zM1108 533h3v1h-3zM1112 533h4v1h-4zM1117 533h4v1h-4zM1123 533h2v1h-2zM1126 533h3v1h-3zM1130 533h3v1h-3zM1099 535h1v1h-1zM1101 535h6v1h-6zM1108 535h3v1h-3zM1112 535h4v1h-4zM1117 535h3v1h-3zM1121 535h2v1h-2zM1124 535h2v1h-2zM1127 535h3v1h-3zM1131 535h3v1h-3zM1099 537h1v1h-1zM1101 537h6v1h-6zM1108 537h3v1h-3zM1112 537h4v1h-4zM1117 537h6v1h-6zM1124 537h2v1h-2zM1127 537h3v1h-3zM1131 537h3v1h-3zM1099 543h1v1h-1zM1099 545h1v1h-1zM1101 545h5v1h-5zM1107 545h6v1h-6zM1114 545h3v1h-3zM1099 547h1v1h-1zM1099 551h1v1h-1zM1101 551h6v1h-6zM1108 551h3v1h-3zM1112 551h4v1h-4zM1117 551h5v1h-5zM1123 551h5v1h-5zM1129 551h7v1h-7zM1137 551h1v1h-1zM1139 551h2v1h-2zM1142 551h3v1h-3zM1146 551h3v1h-3zM1099 555h1v1h-1zM1101 555h6v1h-6zM1108 555h3v1h-3zM1112 555h4v1h-4zM1117 555h6v1h-6zM1124 555h3v1h-3zM1128 555h2v1h-2zM1131 555h2v1h-2zM1134 555h3v1h-3zM1138 555h3v1h-3zM1099 559h1v1h-1zM1101 559h6v1h-6zM1108 559h3v1h-3zM1112 559h4v1h-4zM1117 559h3v1h-3zM1121 559h3v1h-3zM1125 559h2v1h-2zM1128 559h3v1h-3zM1132 559h3v1h-3zM1099 563h1v1h-1zM1101 563h6v1h-6zM1108 563h3v1h-3zM1112 563h4v1h-4zM1117 563h5v1h-5zM1123 563h3v1h-3zM1127 563h2v1h-2zM1130 563h3v1h-3zM1134 563h3v1h-3zM1099 567h1v1h-1zM1101 567h6v1h-6zM1108 567h3v1h-3zM1112 567h4v1h-4zM1117 567h6v1h-6zM1124 567h2v1h-2zM1127 567h3v1h-3zM1131 567h3v1h-3zM1099 569h1v1h-1zM1101 569h6v1h-6zM1108 569h1v1h-1zM1110 569h6v1h-6zM1117 569h3v1h-3zM1121 569h2v1h-2zM1099 573h1v1h-1zM1099 575h1v1h-1zM1101 575h5v1h-5zM1107 575h6v1h-6zM1114 575h2v1h-2zM1099 577h1v1h-1zM1099 587h1v1h-1zM1099 589h1v1h-1zM1101 589h6v1h-6zM1108 589h1v1h-1zM1110 589h5v1h-5zM1099 591h1v1h-1zM1099 595h1v1h-1zM1101 595h6v1h-6zM1108 595h3v1h-3zM1112 595h4v1h-4zM1117 595h5v1h-5zM1123 595h7v1h-7zM1132 595h2v1h-2zM1135 595h3v1h-3zM1139 595h3v1h-3zM1099 597h1v1h-1zM1101 597h6v1h-6zM1108 597h3v1h-3zM1112 597h4v1h-4zM1117 597h7v1h-7zM1125 597h3v1h-3zM1129 597h2v1h-2zM1132 597h3v1h-3zM1136 597h3v1h-3zM1099 599h1v1h-1zM1101 599h6v1h-6zM1108 599h3v1h-3zM1112 599h4v1h-4zM1117 599h4v1h-4zM1122 599h2v1h-2zM1125 599h2v1h-2zM1128 599h3v1h-3zM1132 599h3v1h-3zM1099 601h1v1h-1zM1101 601h6v1h-6zM1109 601h6v1h-6zM1116 601h3v1h-3zM1120 601h1v1h-1z" fill="#46663a"/>
<path d="M1099 86h1v1h-1zM1101 86h6v1h-6zM1108 86h6v1h-6zM1115 86h3v1h-3zM1099 90h1v1h-1zM1099 92h1v1h-1zM1101 92h6v1h-6zM1108 92h4v1h-4zM1099 94h1v1h-1zM1099 96h1v1h-1zM1101 96h6v1h-6zM1108 96h3v1h-3zM1112 96h4v1h-4zM1117 96h5v1h-5zM1123 96h2v1h-2zM1126 96h3v1h-3zM1130 96h3v1h-3zM1099 98h1v1h-1zM1101 98h6v1h-6zM1108 98h3v1h-3zM1112 98h4v1h-4zM1117 98h3v1h-3zM1121 98h1v1h-1zM1123 98h2v1h-2zM1126 98h3v1h-3zM1130 98h3v1h-3zM1099 100h1v1h-1zM1101 100h6v1h-6zM1108 100h3v1h-3zM1112 100h6v1h-6zM1099 106h1v1h-1zM1101 106h6v1h-6zM1108 106h3v1h-3zM1112 106h4v1h-4zM1117 106h6v1h-6zM1125 106h2v1h-2zM1128 106h3v1h-3zM1132 106h3v1h-3zM1099 108h1v1h-1zM1101 108h6v1h-6zM1108 108h3v1h-3zM1112 108h4v1h-4zM1117 108h5v1h-5zM1123 108h2v1h-2zM1126 108h3v1h-3zM1130 108h3v1h-3zM1099 110h1v1h-1zM1101 110h6v1h-6zM1108 110h3v1h-3zM1112 110h4v1h-4zM1117 110h5v1h-5zM1123 110h2v1h-2zM1126 110h3v1h-3zM1130 110h3v1h-3zM1099 112h1v1h-1zM1101 112h6v1h-6zM1108 112h3v1h-3zM1112 112h4v1h-4zM1117 112h5v1h-5zM1123 112h2v1h-2zM1126 112h3v1h-3zM1130 112h3v1h-3zM1099 116h1v1h-1zM1101 116h6v1h-6zM1108 116h3v1h-3zM1112 116h4v1h-4zM1117 116h6v1h-6zM1124 116h1v1h-1zM1126 116h2v1h-2zM1129 116h3v1h-3zM1133 116h3v1h-3zM1099 120h1v1h-1zM1099 122h1v1h-1zM1101 122h6v1h-6zM1108 122h6v1h-6zM1115 122h2v1h-2zM1099 124h1v1h-1zM1099 130h1v1h-1zM1101 130h6v1h-6zM1108 130h3v1h-3zM1112 130h4v1h-4zM1117 130h6v1h-6zM1124 130h4v1h-4zM1130 130h2v1h-2zM1133 130h3v1h-3zM1137 130h3v1h-3zM1099 134h1v1h-1zM1101 134h6v1h-6zM1108 134h3v1h-3zM1112 134h4v1h-4zM1117 134h5v1h-5zM1123 134h3v1h-3zM1127 134h3v1h-3zM1131 134h1v1h-1zM1133 134h2v1h-2zM1136 134h3v1h-3zM1140 134h3v1h-3zM1099 146h1v1h-1zM1101 146h6v1h-6zM1108 146h3v1h-3zM1113 146h6v1h-6zM1120 146h3v1h-3zM1124 146h1v1h-1zM1099 150h1v1h-1zM1099 152h1v1h-1zM1101 152h6v1h-6zM1108 152h2v1h-2zM1111 152h6v1h-6zM1099 154h1v1h-1zM1099 160h1v1h-1zM1099 162h1v1h-1zM1101 162h6v1h-6zM1108 162h1v1h-1zM1110 162h6v1h-6zM1099 164h1v1h-1zM1099 168h1v1h-1zM1101 168h6v1h-6zM1108 168h3v1h-3zM1112 168h4v1h-4zM1117 168h6v1h-6zM1124 168h4v1h-4zM1130 168h2v1h-2zM1133 168h3v1h-3zM1137 168h3v1h-3zM1099 176h1v1h-1zM1101 176h6v1h-6zM1108 176h3v1h-3zM1112 176h1v1h-1zM1114 176h6v1h-6zM1121 176h3v1h-3zM1099 180h1v1h-1zM1101 180h6v1h-6zM1108 180h3v1h-3zM1112 180h4v1h-4zM1117 180h5v1h-5zM1124 180h2v1h-2zM1127 180h3v1h-3zM1131 180h3v1h-3zM1099 182h1v1h-1zM1101 182h6v1h-6zM1108 182h3v1h-3zM1112 182h4v1h-4zM1117 182h6v1h-6zM1124 182h2v1h-2zM1127 182h3v1h-3zM1131 182h3v1h-3zM1099 184h1v1h-1zM1101 184h6v1h-6zM1108 184h3v1h-3zM1112 184h4v1h-4zM1117 184h5v1h-5zM1124 184h2v1h-2zM1127 184h3v1h-3zM1131 184h3v1h-3zM1099 186h1v1h-1zM1101 186h6v1h-6zM1108 186h3v1h-3zM1112 186h4v1h-4zM1117 186h6v1h-6zM1124 186h7v1h-7zM1132 186h3v1h-3zM1136 186h2v1h-2zM1139 186h3v1h-3zM1143 186h3v1h-3zM1099 188h1v1h-1zM1101 188h6v1h-6zM1108 188h3v1h-3zM1112 188h4v1h-4zM1117 188h7v1h-7zM1125 188h5v1h-5zM1131 188h1v1h-1zM1133 188h2v1h-2zM1136 188h3v1h-3zM1140 188h3v1h-3zM1099 194h1v1h-1zM1101 194h6v1h-6zM1108 194h3v1h-3zM1112 194h4v1h-4zM1117 194h7v1h-7zM1125 194h6v1h-6zM1132 194h7v1h-7zM1140 194h2v1h-2zM1143 194h2v1h-2zM1146 194h3v1h-3zM1150 194h3v1h-3zM1099 202h1v1h-1zM1101 202h6v1h-6zM1108 202h3v1h-3zM1112 202h4v1h-4zM1117 202h5v1h-5zM1124 202h2v1h-2zM1127 202h3v1h-3zM1131 202h3v1h-3zM1099 206h1v1h-1zM1101 206h6v1h-6zM1108 206h3v1h-3zM1112 206h4v1h-4zM1117 206h3v1h-3zM1121 206h2v1h-2zM1124 206h2v1h-2zM1127 206h3v1h-3zM1131 206h3v1h-3zM1099 208h1v1h-1zM1101 208h6v1h-6zM1108 208h3v1h-3zM1112 208h4v1h-4zM1117 208h7v1h-7zM1126 208h2v1h-2zM1129 208h3v1h-3zM1133 208h3v1h-3zM1099 212h1v1h-1zM1099 214h1v1h-1zM1101 214h4v1h-4zM1106 214h6v1h-6zM1113 214h3v1h-3zM1099 216h1v1h-1zM1099 218h1v1h-1zM1101 218h6v1h-6zM1108 218h3v1h-3zM1112 218h4v1h-4zM1117 218h4v1h-4zM1122 218h5v1h-5zM1128 218h2v1h-2zM1131 218h3v1h-3zM1135 218h3v1h-3zM1099 222h1v1h-1zM1101 222h6v1h-6zM1108 222h3v1h-3zM1112 222h4v1h-4zM1117 222h7v1h-7zM1125 222h6v1h-6zM1132 222h2v1h-2zM1135 222h3v1h-3zM1139 222h3v1h-3zM1099 224h1v1h-1zM1101 224h6v1h-6zM1108 224h3v1h-3zM1112 224h4v1h-4zM1117 224h7v1h-7zM1126 224h2v1h-2zM1129 224h3v1h-3zM1133 224h3v1h-3zM1099 232h1v1h-1zM1101 232h6v1h-6zM1108 232h3v1h-3zM1112 232h1v1h-1zM1114 232h6v1h-6zM1121 232h2v1h-2zM1099 236h1v1h-1zM1099 238h1v1h-1zM1101 238h3v1h-3zM1105 238h6v1h-6zM1112 238h1v1h-1zM1099 240h1v1h-1zM1099 242h1v1h-1zM1101 242h6v1h-6zM1108 242h3v1h-3zM1112 242h4v1h-4zM1117 242h3v1h-3zM1121 242h3v1h-3zM1125 242h2v1h-2zM1128 242h3v1h-3zM1132 242h3v1h-3zM1099 246h1v1h-1zM1099 248h1v1h-1zM1101 248h6v1h-6zM1109 248h6v1h-6zM1099 250h1v1h-1zM1099 256h1v1h-1zM1099 258h1v1h-1zM1101 258h5v1h-5zM1107 258h6v1h-6zM1099 260h1v1h-1zM1099 268h1v1h-1zM1099 270h1v1h-1zM1101 270h6v1h-6zM1108 270h3v1h-3zM1112 270h6v1h-6zM1099 272h1v1h-1zM1099 276h1v1h-1zM1101 276h6v1h-6zM1108 276h3v1h-3zM1112 276h4v1h-4zM1117 276h7v1h-7zM1125 276h5v1h-5zM1131 276h5v1h-5zM1137 276h2v1h-2zM1140 276h2v1h-2zM1143 276h3v1h-3zM1147 276h3v1h-3zM1099 282h1v1h-1zM1101 282h6v1h-6zM1108 282h3v1h-3zM1112 282h6v1h-6zM1119 282h3v1h-3zM1123 282h3v1h-3zM1099 286h1v1h-1zM1099 288h1v1h-1zM1101 288h6v1h-6zM1109 288h6v1h-6zM1116 288h3v1h-3zM1099 290h1v1h-1zM1099 294h1v1h-1zM1101 294h6v1h-6zM1108 294h3v1h-3zM1112 294h4v1h-4zM1117 294h3v1h-3zM1121 294h6v1h-6zM1128 294h6v1h-6zM1135 294h3v1h-3zM1140 294h2v1h-2zM1143 294h3v1h-3zM1147 294h3v1h-3zM1099 300h1v1h-1zM1101 300h6v1h-6zM1108 300h3v1h-3zM1112 300h2v1h-2zM1115 300h6v1h-6zM1122 300h3v1h-3zM1126 300h1v1h-1zM1099 302h1v1h-1zM1101 302h6v1h-6zM1108 302h3v1h-3zM1113 302h6v1h-6zM1120 302h1v1h-1zM1099 306h1v1h-1zM1101 306h6v1h-6zM1108 306h3v1h-3zM1112 306h4v1h-4zM1117 306h5v1h-5zM1123 306h2v1h-2zM1126 306h3v1h-3zM1130 306h3v1h-3zM1099 310h1v1h-1zM1099 312h1v1h-1zM1101 312h6v1h-6zM1108 312h2v1h-2zM1111 312h6v1h-6zM1099 314h1v1h-1zM1099 320h1v1h-1zM1099 322h1v1h-1zM1101 322h6v1h-6zM1108 322h1v1h-1zM1110 322h6v1h-6zM1099 324h1v1h-1zM1099 328h1v1h-1zM1101 328h6v1h-6zM1108 328h3v1h-3zM1112 328h4v1h-4zM1117 328h3v1h-3zM1121 328h3v1h-3zM1125 328h2v1h-2zM1128 328h3v1h-3zM1132 328h3v1h-3zM1099 336h1v1h-1zM1101 336h6v1h-6zM1108 336h3v1h-3zM1112 336h4v1h-4zM1117 336h4v1h-4zM1123 336h2v1h-2zM1126 336h3v1h-3zM1130 336h3v1h-3zM1099 338h1v1h-1zM1101 338h6v1h-6zM1108 338h3v1h-3zM1112 338h4v1h-4zM1117 338h3v1h-3zM1121 338h4v1h-4zM1126 338h2v1h-2zM1129 338h3v1h-3zM1133 338h3v1h-3zM1099 340h1v1h-1zM1101 340h6v1h-6zM1108 340h3v1h-3zM1112 340h4v1h-4zM1117 340h6v1h-6zM1124 340h1v1h-1zM1126 340h2v1h-2zM1129 340h3v1h-3zM1133 340h3v1h-3zM1099 346h1v1h-1zM1099 348h1v1h-1zM1101 348h6v1h-6zM1108 348h3v1h-3zM1112 348h6v1h-6zM1119 348h3v1h-3zM1099 350h1v1h-1zM1099 354h1v1h-1zM1101 354h6v1h-6zM1108 354h3v1h-3zM1113 354h6v1h-6zM1120 354h3v1h-3zM1124 354h4v1h-4zM1099 358h1v1h-1zM1101 358h6v1h-6zM1108 358h3v1h-3zM1112 358h4v1h-4zM1117 358h3v1h-3zM1121 358h1v1h-1zM1123 358h2v1h-2zM1126 358h3v1h-3zM1130 358h3v1h-3zM1099 360h1v1h-1zM1101 360h6v1h-6zM1108 360h3v1h-3zM1112 360h4v1h-4zM1117 360h7v1h-7zM1126 360h2v1h-2zM1129 360h3v1h-3zM1133 360h3v1h-3zM1099 362h1v1h-1zM1101 362h6v1h-6zM1108 362h3v1h-3zM1112 362h4v1h-4zM1117 362h7v1h-7zM1126 362h2v1h-2zM1129 362h3v1h-3zM1133 362h3v1h-3zM1099 366h1v1h-1zM1101 366h6v1h-6zM1108 366h3v1h-3zM1112 366h4v1h-4zM1117 366h3v1h-3zM1121 366h4v1h-4zM1126 366h2v1h-2zM1129 366h3v1h-3zM1133 366h3v1h-3zM1099 368h1v1h-1zM1101 368h6v1h-6zM1108 368h3v1h-3zM1112 368h4v1h-4zM1117 368h4v1h-4zM1122 368h2v1h-2zM1125 368h3v1h-3zM1129 368h3v1h-3zM1099 370h1v1h-1zM1101 370h6v1h-6zM1108 370h3v1h-3zM1112 370h4v1h-4zM1117 370h4v1h-4zM1122 370h2v1h-2zM1125 370h3v1h-3zM1129 370h3v1h-3zM1099 376h1v1h-1zM1101 376h6v1h-6zM1108 376h3v1h-3zM1112 376h4v1h-4zM1117 376h5v1h-5zM1123 376h2v1h-2zM1126 376h3v1h-3zM1130 376h3v1h-3zM1099 378h1v1h-1zM1101 378h6v1h-6zM1108 378h3v1h-3zM1112 378h4v1h-4zM1117 378h5v1h-5zM1123 378h2v1h-2zM1126 378h3v1h-3zM1130 378h3v1h-3zM1099 380h1v1h-1zM1101 380h6v1h-6zM1108 380h3v1h-3zM1112 380h4v1h-4zM1117 380h5v1h-5zM1123 380h2v1h-2zM1126 380h3v1h-3zM1130 380h3v1h-3zM1099 382h1v1h-1zM1101 382h6v1h-6zM1108 382h3v1h-3zM1112 382h4v1h-4zM1117 382h4v1h-4zM1123 382h2v1h-2zM1126 382h3v1h-3zM1130 382h3v1h-3zM1099 384h1v1h-1zM1101 384h6v1h-6zM1108 384h3v1h-3zM1112 384h4v1h-4zM1117 384h3v1h-3zM1121 384h1v1h-1zM1123 384h2v1h-2zM1126 384h3v1h-3zM1130 384h3v1h-3zM1099 390h1v1h-1zM1101 390h6v1h-6zM1108 390h3v1h-3zM1112 390h4v1h-4zM1117 390h3v1h-3zM1122 390h2v1h-2zM1125 390h3v1h-3zM1129 390h3v1h-3zM1099 392h1v1h-1zM1101 392h6v1h-6zM1108 392h3v1h-3zM1112 392h4v1h-4zM1117 392h3v1h-3zM1121 392h1v1h-1zM1123 392h2v1h-2zM1126 392h3v1h-3zM1130 392h3v1h-3zM1099 394h1v1h-1zM1101 394h6v1h-6zM1108 394h3v1h-3zM1112 394h4v1h-4zM1117 394h5v1h-5zM1123 394h2v1h-2zM1126 394h3v1h-3zM1130 394h3v1h-3zM1099 398h1v1h-1zM1101 398h6v1h-6zM1108 398h3v1h-3zM1112 398h4v1h-4zM1117 398h6v1h-6zM1124 398h2v1h-2zM1127 398h3v1h-3zM1131 398h3v1h-3zM1099 402h1v1h-1zM1101 402h6v1h-6zM1108 402h3v1h-3zM1112 402h4v1h-4zM1117 402h1v1h-1zM1119 402h2v1h-2zM1122 402h3v1h-3zM1126 402h3v1h-3zM1099 408h1v1h-1zM1101 408h6v1h-6zM1108 408h3v1h-3zM1112 408h4v1h-4zM1117 408h4v1h-4zM1123 408h2v1h-2zM1126 408h3v1h-3zM1130 408h3v1h-3zM1099 410h1v1h-1zM1101 410h6v1h-6zM1108 410h3v1h-3zM1112 410h4v1h-4zM1117 410h5v1h-5zM1123 410h2v1h-2zM1126 410h3v1h-3zM1130 410h3v1h-3zM1099 412h1v1h-1zM1101 412h6v1h-6zM1108 412h3v1h-3zM1112 412h4v1h-4zM1117 412h3v1h-3zM1121 412h2v1h-2zM1124 412h3v1h-3zM1128 412h3v1h-3zM1099 414h1v1h-1zM1101 414h6v1h-6zM1108 414h3v1h-3zM1112 414h4v1h-4zM1117 414h3v1h-3zM1121 414h2v1h-2zM1124 414h3v1h-3zM1128 414h3v1h-3zM1099 416h1v1h-1zM1101 416h6v1h-6zM1108 416h3v1h-3zM1112 416h4v1h-4zM1117 416h5v1h-5zM1123 416h2v1h-2zM1126 416h3v1h-3zM1130 416h3v1h-3zM1099 422h1v1h-1zM1101 422h6v1h-6zM1108 422h3v1h-3zM1112 422h4v1h-4zM1117 422h4v1h-4zM1122 422h3v1h-3zM1126 422h2v1h-2zM1129 422h2v1h-2zM1132 422h3v1h-3zM1136 422h3v1h-3zM1099 426h1v1h-1zM1101 426h6v1h-6zM1108 426h3v1h-3zM1112 426h4v1h-4zM1117 426h5v1h-5zM1123 426h3v1h-3zM1127 426h2v1h-2zM1130 426h3v1h-3zM1134 426h3v1h-3zM1099 430h1v1h-1zM1101 430h6v1h-6zM1108 430h3v1h-3zM1112 430h4v1h-4zM1117 430h4v1h-4zM1122 430h1v1h-1zM1124 430h2v1h-2zM1127 430h3v1h-3zM1131 430h3v1h-3zM1099 432h1v1h-1zM1101 432h6v1h-6zM1108 432h3v1h-3zM1112 432h4v1h-4zM1117 432h6v1h-6zM1124 432h2v1h-2zM1127 432h3v1h-3zM1131 432h3v1h-3zM1099 434h1v1h-1zM1101 434h6v1h-6zM1108 434h3v1h-3zM1112 434h4v1h-4zM1117 434h6v1h-6zM1124 434h2v1h-2zM1127 434h3v1h-3zM1131 434h3v1h-3zM1099 440h1v1h-1zM1101 440h6v1h-6zM1108 440h3v1h-3zM1112 440h4v1h-4zM1117 440h7v1h-7zM1125 440h2v1h-2zM1128 440h2v1h-2zM1131 440h3v1h-3zM1135 440h3v1h-3zM1099 446h1v1h-1zM1099 448h1v1h-1zM1101 448h5v1h-5zM1107 448h6v1h-6zM1114 448h1v1h-1zM1099 450h1v1h-1zM1099 454h1v1h-1zM1101 454h6v1h-6zM1108 454h3v1h-3zM1112 454h4v1h-4zM1117 454h7v1h-7zM1125 454h4v1h-4zM1130 454h2v1h-2zM1133 454h3v1h-3zM1137 454h3v1h-3zM1099 456h1v1h-1zM1101 456h6v1h-6zM1108 456h3v1h-3zM1112 456h4v1h-4zM1117 456h3v1h-3zM1121 456h7v1h-7zM1130 456h2v1h-2zM1133 456h3v1h-3zM1137 456h3v1h-3zM1099 458h1v1h-1zM1101 458h6v1h-6zM1108 458h3v1h-3zM1112 458h4v1h-4zM1117 458h7v1h-7zM1125 458h4v1h-4zM1130 458h2v1h-2zM1133 458h3v1h-3zM1137 458h3v1h-3zM1099 460h1v1h-1zM1101 460h6v1h-6zM1108 460h3v1h-3zM1112 460h4v1h-4zM1117 460h6v1h-6zM1124 460h4v1h-4zM1130 460h2v1h-2zM1133 460h3v1h-3zM1137 460h3v1h-3zM1099 462h1v1h-1zM1101 462h6v1h-6zM1108 462h3v1h-3zM1112 462h4v1h-4zM1117 462h5v1h-5zM1123 462h6v1h-6zM1130 462h2v1h-2zM1133 462h3v1h-3zM1137 462h3v1h-3zM1099 464h1v1h-1zM1101 464h6v1h-6zM1108 464h3v1h-3zM1112 464h4v1h-4zM1117 464h5v1h-5zM1123 464h6v1h-6zM1130 464h2v1h-2zM1133 464h3v1h-3zM1137 464h3v1h-3zM1099 468h1v1h-1zM1099 470h1v1h-1zM1101 470h6v1h-6zM1108 470h3v1h-3zM1112 470h4v1h-4zM1117 470h3v1h-3zM1121 470h2v1h-2zM1124 470h3v1h-3zM1128 470h3v1h-3zM1099 472h1v1h-1zM1099 492h1v1h-1zM1101 492h6v1h-6zM1108 492h3v1h-3zM1112 492h4v1h-4zM1117 492h7v1h-7zM1125 492h2v1h-2zM1128 492h2v1h-2zM1131 492h3v1h-3zM1135 492h3v1h-3zM1099 494h1v1h-1zM1101 494h6v1h-6zM1108 494h1v1h-1zM1110 494h6v1h-6zM1117 494h3v1h-3zM1121 494h1v1h-1zM1099 502h1v1h-1zM1101 502h6v1h-6zM1108 502h3v1h-3zM1112 502h4v1h-4zM1117 502h3v1h-3zM1121 502h6v1h-6zM1128 502h5v1h-5zM1134 502h2v1h-2zM1137 502h3v1h-3zM1141 502h3v1h-3zM1099 504h1v1h-1zM1101 504h6v1h-6zM1108 504h3v1h-3zM1112 504h4v1h-4zM1117 504h5v1h-5zM1124 504h2v1h-2zM1127 504h3v1h-3zM1131 504h3v1h-3zM1099 506h1v1h-1zM1101 506h6v1h-6zM1108 506h3v1h-3zM1112 506h2v1h-2zM1115 506h6v1h-6zM1122 506h3v1h-3zM1099 514h1v1h-1zM1099 516h1v1h-1zM1101 516h6v1h-6zM1108 516h3v1h-3zM1112 516h1v1h-1zM1114 516h6v1h-6zM1121 516h3v1h-3zM1125 516h1v1h-1zM1099 518h1v1h-1zM1099 520h1v1h-1zM1101 520h6v1h-6zM1108 520h3v1h-3zM1112 520h4v1h-4zM1117 520h2v1h-2zM1120 520h2v1h-2zM1123 520h3v1h-3zM1127 520h3v1h-3zM1099 526h1v1h-1zM1101 526h6v1h-6zM1108 526h3v1h-3zM1112 526h4v1h-4zM1117 526h6v1h-6zM1124 526h4v1h-4zM1129 526h2v1h-2zM1132 526h3v1h-3zM1136 526h3v1h-3zM1099 528h1v1h-1zM1101 528h6v1h-6zM1108 528h3v1h-3zM1112 528h4v1h-4zM1117 528h5v1h-5zM1123 528h2v1h-2zM1126 528h3v1h-3zM1130 528h3v1h-3zM1099 534h1v1h-1zM1101 534h6v1h-6zM1108 534h3v1h-3zM1112 534h4v1h-4zM1117 534h4v1h-4zM1123 534h2v1h-2zM1126 534h3v1h-3zM1130 534h3v1h-3zM1099 536h1v1h-1zM1101 536h6v1h-6zM1108 536h3v1h-3zM1112 536h4v1h-4zM1117 536h3v1h-3zM1121 536h2v1h-2zM1124 536h2v1h-2zM1127 536h3v1h-3zM1131 536h3v1h-3zM1099 538h1v1h-1zM1101 538h6v1h-6zM1108 538h3v1h-3zM1112 538h4v1h-4zM1117 538h6v1h-6zM1124 538h2v1h-2zM1127 538h3v1h-3zM1131 538h3v1h-3zM1099 544h1v1h-1zM1099 546h1v1h-1zM1101 546h5v1h-5zM1107 546h6v1h-6zM1114 546h3v1h-3zM1099 548h1v1h-1zM1099 552h1v1h-1zM1101 552h6v1h-6zM1108 552h3v1h-3zM1112 552h4v1h-4zM1117 552h5v1h-5zM1123 552h5v1h-5zM1129 552h7v1h-7zM1137 552h1v1h-1zM1139 552h2v1h-2zM1142 552h3v1h-3zM1146 552h3v1h-3zM1099 556h1v1h-1zM1101 556h6v1h-6zM1108 556h3v1h-3zM1112 556h4v1h-4zM1117 556h6v1h-6zM1124 556h3v1h-3zM1128 556h2v1h-2zM1131 556h2v1h-2zM1134 556h3v1h-3zM1138 556h3v1h-3zM1099 560h1v1h-1zM1101 560h6v1h-6zM1108 560h3v1h-3zM1112 560h4v1h-4zM1117 560h3v1h-3zM1121 560h3v1h-3zM1125 560h2v1h-2zM1128 560h3v1h-3zM1132 560h3v1h-3zM1099 564h1v1h-1zM1101 564h6v1h-6zM1108 564h3v1h-3zM1112 564h4v1h-4zM1117 564h5v1h-5zM1123 564h3v1h-3zM1127 564h2v1h-2zM1130 564h3v1h-3zM1134 564h3v1h-3zM1099 568h1v1h-1zM1101 568h6v1h-6zM1108 568h3v1h-3zM1112 568h4v1h-4zM1117 568h6v1h-6zM1124 568h2v1h-2zM1127 568h3v1h-3zM1131 568h3v1h-3zM1099 570h1v1h-1zM1101 570h6v1h-6zM1108 570h1v1h-1zM1110 570h6v1h-6zM1117 570h3v1h-3zM1121 570h2v1h-2zM1099 574h1v1h-1zM1099 576h1v1h-1zM1101 576h5v1h-5zM1107 576h6v1h-6zM1114 576h2v1h-2zM1099 578h1v1h-1zM1099 588h1v1h-1zM1099 590h1v1h-1zM1101 590h6v1h-6zM1108 590h1v1h-1zM1110 590h5v1h-5zM1099 592h1v1h-1zM1099 596h1v1h-1zM1101 596h6v1h-6zM1108 596h3v1h-3zM1112 596h4v1h-4zM1117 596h5v1h-5zM1123 596h7v1h-7zM1132 596h2v1h-2zM1135 596h3v1h-3zM1139 596h3v1h-3zM1099 598h1v1h-1zM1101 598h6v1h-6zM1108 598h3v1h-3zM1112 598h4v1h-4zM1117 598h7v1h-7zM1125 598h3v1h-3zM1129 598h2v1h-2zM1132 598h3v1h-3zM1136 598h3v1h-3zM1099 600h1v1h-1zM1101 600h6v1h-6zM1108 600h3v1h-3zM1112 600h4v1h-4zM1117 600h4v1h-4zM1122 600h2v1h-2zM1125 600h2v1h-2zM1128 600h3v1h-3zM1132 600h3v1h-3zM1099 602h1v1h-1zM1101 602h6v1h-6zM1109 602h6v1h-6zM1116 602h3v1h-3zM1120 602h1v1h-1z" fill="#2a3327"/>
<path d="M1099 103h6v1h-6zM1106 103h3v1h-3zM1110 103h4v1h-4zM1115 103h4v1h-4zM1120 103h1v1h-1zM1099 113h6v1h-6zM1106 113h3v1h-3zM1110 113h4v1h-4zM1115 113h5v1h-5zM1099 125h6v1h-6zM1106 125h3v1h-3zM1110 125h4v1h-4zM1115 125h7v1h-7zM1123 125h5v1h-5zM1129 125h2v1h-2zM1099 127h6v1h-6zM1106 127h3v1h-3zM1110 127h4v1h-4zM1115 127h6v1h-6zM1122 127h3v1h-3zM1099 131h6v1h-6zM1106 131h3v1h-3zM1110 131h4v1h-4zM1115 131h3v1h-3zM1119 131h7v1h-7zM1127 131h3v1h-3zM1099 135h6v1h-6zM1106 135h3v1h-3zM1110 135h4v1h-4zM1115 135h5v1h-5zM1121 135h6v1h-6zM1099 137h6v1h-6zM1106 137h3v1h-3zM1110 137h4v1h-4zM1115 137h4v1h-4zM1120 137h1v1h-1zM1099 139h6v1h-6zM1106 139h3v1h-3zM1110 139h4v1h-4zM1115 139h4v1h-4zM1120 139h5v1h-5zM1126 139h3v1h-3zM1099 141h6v1h-6zM1106 141h3v1h-3zM1110 141h4v1h-4zM1115 141h6v1h-6zM1122 141h3v1h-3zM1126 141h3v1h-3zM1099 143h6v1h-6zM1106 143h3v1h-3zM1110 143h4v1h-4zM1115 143h7v1h-7zM1123 143h4v1h-4zM1099 155h6v1h-6zM1106 155h3v1h-3zM1110 155h4v1h-4zM1115 155h5v1h-5zM1121 155h1v1h-1zM1099 165h6v1h-6zM1106 165h3v1h-3zM1110 165h4v1h-4zM1115 165h6v1h-6zM1122 165h4v1h-4zM1127 165h3v1h-3zM1131 165h5v1h-5zM1099 169h6v1h-6zM1106 169h3v1h-3zM1110 169h4v1h-4zM1115 169h4v1h-4zM1120 169h7v1h-7zM1099 171h6v1h-6zM1106 171h3v1h-3zM1110 171h4v1h-4zM1115 171h6v1h-6zM1122 171h4v1h-4zM1099 173h6v1h-6zM1106 173h3v1h-3zM1110 173h4v1h-4zM1115 173h4v1h-4zM1120 173h3v1h-3zM1124 173h3v1h-3zM1128 173h2v1h-2zM1099 189h6v1h-6zM1106 189h3v1h-3zM1110 189h4v1h-4zM1115 189h4v1h-4zM1120 189h5v1h-5zM1126 189h6v1h-6zM1099 191h6v1h-6zM1106 191h3v1h-3zM1110 191h4v1h-4zM1115 191h4v1h-4zM1120 191h5v1h-5zM1126 191h5v1h-5zM1132 191h1v1h-1zM1099 195h6v1h-6zM1106 195h3v1h-3zM1110 195h4v1h-4zM1115 195h7v1h-7zM1123 195h5v1h-5zM1129 195h1v1h-1zM1099 197h6v1h-6zM1106 197h3v1h-3zM1110 197h4v1h-4zM1115 197h4v1h-4zM1120 197h6v1h-6zM1127 197h5v1h-5zM1133 197h3v1h-3zM1099 199h6v1h-6zM1106 199h3v1h-3zM1110 199h4v1h-4zM1115 199h5v1h-5zM1121 199h6v1h-6zM1128 199h5v1h-5zM1099 203h6v1h-6zM1106 203h3v1h-3zM1110 203h4v1h-4zM1115 203h6v1h-6zM1099 219h6v1h-6zM1106 219h3v1h-3zM1110 219h4v1h-4zM1115 219h5v1h-5zM1121 219h5v1h-5zM1099 225h6v1h-6zM1106 225h3v1h-3zM1110 225h4v1h-4zM1115 225h7v1h-7zM1123 225h3v1h-3zM1099 227h6v1h-6zM1106 227h3v1h-3zM1110 227h4v1h-4zM1115 227h3v1h-3zM1119 227h6v1h-6zM1099 229h6v1h-6zM1106 229h3v1h-3zM1110 229h4v1h-4zM1115 229h4v1h-4zM1120 229h4v1h-4zM1099 251h6v1h-6zM1106 251h3v1h-3zM1110 251h4v1h-4zM1115 251h3v1h-3zM1119 251h2v1h-2zM1099 261h6v1h-6zM1106 261h3v1h-3zM1110 261h4v1h-4zM1115 261h7v1h-7zM1123 261h1v1h-1zM1099 263h6v1h-6zM1106 263h3v1h-3zM1110 263h4v1h-4zM1115 263h6v1h-6zM1122 263h3v1h-3zM1099 273h6v1h-6zM1106 273h3v1h-3zM1110 273h4v1h-4zM1115 273h4v1h-4zM1120 273h3v1h-3zM1124 273h6v1h-6zM1131 273h7v1h-7zM1099 277h6v1h-6zM1106 277h3v1h-3zM1110 277h4v1h-4zM1115 277h5v1h-5zM1121 277h5v1h-5zM1099 279h6v1h-6zM1106 279h3v1h-3zM1110 279h4v1h-4zM1115 279h5v1h-5zM1099 291h6v1h-6zM1106 291h3v1h-3zM1110 291h4v1h-4zM1115 291h4v1h-4zM1120 291h3v1h-3zM1124 291h7v1h-7zM1132 291h5v1h-5zM1099 295h6v1h-6zM1106 295h3v1h-3zM1110 295h4v1h-4zM1115 295h3v1h-3zM1119 295h4v1h-4zM1124 295h2v1h-2zM1099 297h6v1h-6zM1106 297h3v1h-3zM1110 297h4v1h-4zM1115 297h3v1h-3zM1119 297h2v1h-2zM1099 315h6v1h-6zM1106 315h3v1h-3zM1110 315h4v1h-4zM1115 315h4v1h-4zM1099 325h6v1h-6zM1106 325h3v1h-3zM1110 325h4v1h-4zM1115 325h6v1h-6zM1122 325h1v1h-1zM1099 329h6v1h-6zM1106 329h3v1h-3zM1110 329h4v1h-4zM1115 329h3v1h-3zM1119 329h3v1h-3zM1099 331h6v1h-6zM1106 331h3v1h-3zM1110 331h4v1h-4zM1115 331h6v1h-6zM1122 331h2v1h-2zM1099 333h6v1h-6zM1106 333h3v1h-3zM1110 333h4v1h-4zM1115 333h4v1h-4zM1099 341h6v1h-6zM1106 341h3v1h-3zM1110 341h4v1h-4zM1115 341h2v1h-2zM1099 351h6v1h-6zM1106 351h3v1h-3zM1110 351h4v1h-4zM1115 351h1v1h-1zM1099 355h6v1h-6zM1106 355h3v1h-3zM1110 355h4v1h-4zM1115 355h4v1h-4zM1099 363h6v1h-6zM1106 363h3v1h-3zM1110 363h4v1h-4zM1115 363h3v1h-3zM1119 363h5v1h-5zM1099 371h6v1h-6zM1106 371h3v1h-3zM1110 371h4v1h-4zM1115 371h6v1h-6zM1099 373h6v1h-6zM1106 373h3v1h-3zM1110 373h4v1h-4zM1115 373h6v1h-6zM1099 385h6v1h-6zM1106 385h3v1h-3zM1110 385h4v1h-4zM1115 385h3v1h-3zM1119 385h6v1h-6zM1099 387h6v1h-6zM1106 387h3v1h-3zM1110 387h4v1h-4zM1115 387h3v1h-3zM1099 395h6v1h-6zM1106 395h3v1h-3zM1110 395h4v1h-4zM1115 395h5v1h-5zM1121 395h1v1h-1zM1099 399h6v1h-6zM1106 399h3v1h-3zM1110 399h4v1h-4zM1115 399h5v1h-5zM1121 399h5v1h-5zM1099 405h6v1h-6zM1106 405h3v1h-3zM1110 405h4v1h-4zM1115 405h6v1h-6zM1099 417h6v1h-6zM1106 417h3v1h-3zM1110 417h4v1h-4zM1115 417h3v1h-3zM1099 419h6v1h-6zM1106 419h3v1h-3zM1110 419h4v1h-4zM1115 419h5v1h-5zM1099 423h6v1h-6zM1106 423h3v1h-3zM1110 423h4v1h-4zM1115 423h4v1h-4zM1120 423h4v1h-4zM1099 427h6v1h-6zM1106 427h3v1h-3zM1110 427h4v1h-4zM1115 427h3v1h-3zM1119 427h1v1h-1zM1099 435h6v1h-6zM1106 435h3v1h-3zM1110 435h4v1h-4zM1115 435h3v1h-3zM1119 435h4v1h-4zM1124 435h2v1h-2zM1099 437h6v1h-6zM1106 437h3v1h-3zM1110 437h4v1h-4zM1115 437h5v1h-5zM1121 437h4v1h-4zM1099 441h6v1h-6zM1106 441h3v1h-3zM1110 441h4v1h-4zM1115 441h3v1h-3zM1119 441h6v1h-6zM1126 441h1v1h-1zM1099 451h6v1h-6zM1106 451h3v1h-3zM1110 451h4v1h-4zM1115 451h6v1h-6zM1099 473h6v1h-6zM1106 473h3v1h-3zM1110 473h4v1h-4zM1115 473h3v1h-3zM1119 473h4v1h-4zM1099 475h6v1h-6zM1106 475h3v1h-3zM1110 475h4v1h-4zM1115 475h4v1h-4zM1099 477h6v1h-6zM1106 477h3v1h-3zM1110 477h4v1h-4zM1115 477h4v1h-4zM1099 479h6v1h-6zM1106 479h3v1h-3zM1110 479h4v1h-4zM1115 479h1v1h-1zM1099 481h6v1h-6zM1106 481h3v1h-3zM1110 481h4v1h-4zM1115 481h1v1h-1zM1099 483h6v1h-6zM1106 483h3v1h-3zM1110 483h4v1h-4zM1115 483h1v1h-1zM1099 485h6v1h-6zM1106 485h3v1h-3zM1110 485h4v1h-4zM1115 485h1v1h-1zM1099 487h6v1h-6zM1106 487h3v1h-3zM1110 487h4v1h-4zM1115 487h1v1h-1zM1099 489h6v1h-6zM1106 489h3v1h-3zM1110 489h4v1h-4zM1115 489h1v1h-1zM1099 497h6v1h-6zM1106 497h3v1h-3zM1110 497h4v1h-4zM1115 497h5v1h-5zM1121 497h3v1h-3zM1099 499h6v1h-6zM1106 499h3v1h-3zM1110 499h4v1h-4zM1115 499h3v1h-3zM1119 499h4v1h-4zM1124 499h3v1h-3zM1099 509h6v1h-6zM1106 509h3v1h-3zM1110 509h4v1h-4zM1115 509h3v1h-3zM1099 521h6v1h-6zM1106 521h3v1h-3zM1110 521h4v1h-4zM1115 521h3v1h-3zM1099 523h6v1h-6zM1106 523h3v1h-3zM1110 523h4v1h-4zM1115 523h3v1h-3zM1099 531h6v1h-6zM1106 531h3v1h-3zM1110 531h4v1h-4zM1115 531h4v1h-4zM1099 539h6v1h-6zM1106 539h3v1h-3zM1110 539h4v1h-4zM1115 539h3v1h-3zM1119 539h3v1h-3zM1099 549h6v1h-6zM1106 549h3v1h-3zM1110 549h4v1h-4zM1115 549h7v1h-7zM1123 549h2v1h-2zM1099 553h6v1h-6zM1106 553h3v1h-3zM1110 553h4v1h-4zM1115 553h6v1h-6zM1122 553h5v1h-5zM1128 553h4v1h-4zM1099 557h6v1h-6zM1106 557h3v1h-3zM1110 557h4v1h-4zM1115 557h5v1h-5zM1121 557h3v1h-3zM1125 557h2v1h-2zM1099 561h6v1h-6zM1106 561h3v1h-3zM1110 561h4v1h-4zM1115 561h6v1h-6zM1099 565h6v1h-6zM1106 565h3v1h-3zM1110 565h4v1h-4zM1115 565h6v1h-6zM1099 579h6v1h-6zM1106 579h3v1h-3zM1110 579h4v1h-4zM1115 579h4v1h-4zM1099 581h6v1h-6zM1106 581h3v1h-3zM1110 581h4v1h-4zM1115 581h4v1h-4zM1099 583h6v1h-6zM1106 583h3v1h-3zM1110 583h4v1h-4zM1115 583h4v1h-4zM1099 593h6v1h-6zM1106 593h3v1h-3zM1110 593h4v1h-4zM1115 593h5v1h-5zM1121 593h1v1h-1z" fill="#6a8ea6"/>
<path d="M1099 104h7v1h-7zM1106 104h4v1h-4zM1110 104h5v1h-5zM1115 104h5v1h-5zM1120 104h2v1h-2zM1099 114h7v1h-7zM1106 114h4v1h-4zM1110 114h5v1h-5zM1115 114h6v1h-6zM1099 126h7v1h-7zM1106 126h4v1h-4zM1110 126h5v1h-5zM1115 126h8v1h-8zM1123 126h6v1h-6zM1129 126h3v1h-3zM1099 128h7v1h-7zM1106 128h4v1h-4zM1110 128h5v1h-5zM1115 128h7v1h-7zM1122 128h4v1h-4zM1099 132h7v1h-7zM1106 132h4v1h-4zM1110 132h5v1h-5zM1115 132h4v1h-4zM1119 132h8v1h-8zM1127 132h4v1h-4zM1099 136h7v1h-7zM1106 136h4v1h-4zM1110 136h5v1h-5zM1115 136h6v1h-6zM1121 136h7v1h-7zM1099 138h7v1h-7zM1106 138h4v1h-4zM1110 138h5v1h-5zM1115 138h5v1h-5zM1120 138h2v1h-2zM1099 140h7v1h-7zM1106 140h4v1h-4zM1110 140h5v1h-5zM1115 140h5v1h-5zM1120 140h6v1h-6zM1126 140h4v1h-4zM1099 142h7v1h-7zM1106 142h4v1h-4zM1110 142h5v1h-5zM1115 142h7v1h-7zM1122 142h4v1h-4zM1126 142h4v1h-4zM1099 144h7v1h-7zM1106 144h4v1h-4zM1110 144h5v1h-5zM1115 144h8v1h-8zM1123 144h5v1h-5zM1099 156h7v1h-7zM1106 156h4v1h-4zM1110 156h5v1h-5zM1115 156h6v1h-6zM1121 156h2v1h-2zM1099 166h7v1h-7zM1106 166h4v1h-4zM1110 166h5v1h-5zM1115 166h7v1h-7zM1122 166h5v1h-5zM1127 166h4v1h-4zM1131 166h6v1h-6zM1099 170h7v1h-7zM1106 170h4v1h-4zM1110 170h5v1h-5zM1115 170h5v1h-5zM1120 170h8v1h-8zM1099 172h7v1h-7zM1106 172h4v1h-4zM1110 172h5v1h-5zM1115 172h7v1h-7zM1122 172h5v1h-5zM1099 174h7v1h-7zM1106 174h4v1h-4zM1110 174h5v1h-5zM1115 174h5v1h-5zM1120 174h4v1h-4zM1124 174h4v1h-4zM1128 174h3v1h-3zM1099 190h7v1h-7zM1106 190h4v1h-4zM1110 190h5v1h-5zM1115 190h5v1h-5zM1120 190h6v1h-6zM1126 190h7v1h-7zM1099 192h7v1h-7zM1106 192h4v1h-4zM1110 192h5v1h-5zM1115 192h5v1h-5zM1120 192h6v1h-6zM1126 192h6v1h-6zM1132 192h2v1h-2zM1099 196h7v1h-7zM1106 196h4v1h-4zM1110 196h5v1h-5zM1115 196h8v1h-8zM1123 196h6v1h-6zM1129 196h2v1h-2zM1099 198h7v1h-7zM1106 198h4v1h-4zM1110 198h5v1h-5zM1115 198h5v1h-5zM1120 198h7v1h-7zM1127 198h6v1h-6zM1133 198h4v1h-4zM1099 200h7v1h-7zM1106 200h4v1h-4zM1110 200h5v1h-5zM1115 200h6v1h-6zM1121 200h7v1h-7zM1128 200h6v1h-6zM1099 204h7v1h-7zM1106 204h4v1h-4zM1110 204h5v1h-5zM1115 204h7v1h-7zM1099 220h7v1h-7zM1106 220h4v1h-4zM1110 220h5v1h-5zM1115 220h6v1h-6zM1121 220h6v1h-6zM1099 226h7v1h-7zM1106 226h4v1h-4zM1110 226h5v1h-5zM1115 226h8v1h-8zM1123 226h4v1h-4zM1099 228h7v1h-7zM1106 228h4v1h-4zM1110 228h5v1h-5zM1115 228h4v1h-4zM1119 228h7v1h-7zM1099 230h7v1h-7zM1106 230h4v1h-4zM1110 230h5v1h-5zM1115 230h5v1h-5zM1120 230h5v1h-5zM1099 252h7v1h-7zM1106 252h4v1h-4zM1110 252h5v1h-5zM1115 252h4v1h-4zM1119 252h3v1h-3zM1099 262h7v1h-7zM1106 262h4v1h-4zM1110 262h5v1h-5zM1115 262h8v1h-8zM1123 262h2v1h-2zM1099 264h7v1h-7zM1106 264h4v1h-4zM1110 264h5v1h-5zM1115 264h7v1h-7zM1122 264h4v1h-4zM1099 274h7v1h-7zM1106 274h4v1h-4zM1110 274h5v1h-5zM1115 274h5v1h-5zM1120 274h4v1h-4zM1124 274h7v1h-7zM1131 274h8v1h-8zM1099 278h7v1h-7zM1106 278h4v1h-4zM1110 278h5v1h-5zM1115 278h6v1h-6zM1121 278h6v1h-6zM1099 280h7v1h-7zM1106 280h4v1h-4zM1110 280h5v1h-5zM1115 280h6v1h-6zM1099 292h7v1h-7zM1106 292h4v1h-4zM1110 292h5v1h-5zM1115 292h5v1h-5zM1120 292h4v1h-4zM1124 292h8v1h-8zM1132 292h6v1h-6zM1099 296h7v1h-7zM1106 296h4v1h-4zM1110 296h5v1h-5zM1115 296h4v1h-4zM1119 296h5v1h-5zM1124 296h3v1h-3zM1099 298h7v1h-7zM1106 298h4v1h-4zM1110 298h5v1h-5zM1115 298h4v1h-4zM1119 298h3v1h-3zM1099 316h7v1h-7zM1106 316h4v1h-4zM1110 316h5v1h-5zM1115 316h5v1h-5zM1099 326h7v1h-7zM1106 326h4v1h-4zM1110 326h5v1h-5zM1115 326h7v1h-7zM1122 326h2v1h-2zM1099 330h7v1h-7zM1106 330h4v1h-4zM1110 330h5v1h-5zM1115 330h4v1h-4zM1119 330h4v1h-4zM1099 332h7v1h-7zM1106 332h4v1h-4zM1110 332h5v1h-5zM1115 332h7v1h-7zM1122 332h3v1h-3zM1099 334h7v1h-7zM1106 334h4v1h-4zM1110 334h5v1h-5zM1115 334h5v1h-5zM1099 342h7v1h-7zM1106 342h4v1h-4zM1110 342h5v1h-5zM1115 342h3v1h-3zM1099 352h7v1h-7zM1106 352h4v1h-4zM1110 352h5v1h-5zM1115 352h2v1h-2zM1099 356h7v1h-7zM1106 356h4v1h-4zM1110 356h5v1h-5zM1115 356h5v1h-5zM1099 364h7v1h-7zM1106 364h4v1h-4zM1110 364h5v1h-5zM1115 364h4v1h-4zM1119 364h6v1h-6zM1099 372h7v1h-7zM1106 372h4v1h-4zM1110 372h5v1h-5zM1115 372h7v1h-7zM1099 374h7v1h-7zM1106 374h4v1h-4zM1110 374h5v1h-5zM1115 374h7v1h-7zM1099 386h7v1h-7zM1106 386h4v1h-4zM1110 386h5v1h-5zM1115 386h4v1h-4zM1119 386h7v1h-7zM1099 388h7v1h-7zM1106 388h4v1h-4zM1110 388h5v1h-5zM1115 388h4v1h-4zM1099 396h7v1h-7zM1106 396h4v1h-4zM1110 396h5v1h-5zM1115 396h6v1h-6zM1121 396h2v1h-2zM1099 400h7v1h-7zM1106 400h4v1h-4zM1110 400h5v1h-5zM1115 400h6v1h-6zM1121 400h6v1h-6zM1099 406h7v1h-7zM1106 406h4v1h-4zM1110 406h5v1h-5zM1115 406h7v1h-7zM1099 418h7v1h-7zM1106 418h4v1h-4zM1110 418h5v1h-5zM1115 418h4v1h-4zM1099 420h7v1h-7zM1106 420h4v1h-4zM1110 420h5v1h-5zM1115 420h6v1h-6zM1099 424h7v1h-7zM1106 424h4v1h-4zM1110 424h5v1h-5zM1115 424h5v1h-5zM1120 424h5v1h-5zM1099 428h7v1h-7zM1106 428h4v1h-4zM1110 428h5v1h-5zM1115 428h4v1h-4zM1119 428h2v1h-2zM1099 436h7v1h-7zM1106 436h4v1h-4zM1110 436h5v1h-5zM1115 436h4v1h-4zM1119 436h5v1h-5zM1124 436h3v1h-3zM1099 438h7v1h-7zM1106 438h4v1h-4zM1110 438h5v1h-5zM1115 438h6v1h-6zM1121 438h5v1h-5zM1099 442h7v1h-7zM1106 442h4v1h-4zM1110 442h5v1h-5zM1115 442h4v1h-4zM1119 442h7v1h-7zM1126 442h2v1h-2zM1099 452h7v1h-7zM1106 452h4v1h-4zM1110 452h5v1h-5zM1115 452h7v1h-7zM1099 474h7v1h-7zM1106 474h4v1h-4zM1110 474h5v1h-5zM1115 474h4v1h-4zM1119 474h5v1h-5zM1099 476h7v1h-7zM1106 476h4v1h-4zM1110 476h5v1h-5zM1115 476h5v1h-5zM1099 478h7v1h-7zM1106 478h4v1h-4zM1110 478h5v1h-5zM1115 478h5v1h-5zM1099 480h7v1h-7zM1106 480h4v1h-4zM1110 480h5v1h-5zM1115 480h2v1h-2zM1099 482h7v1h-7zM1106 482h4v1h-4zM1110 482h5v1h-5zM1115 482h2v1h-2zM1099 484h7v1h-7zM1106 484h4v1h-4zM1110 484h5v1h-5zM1115 484h2v1h-2zM1099 486h7v1h-7zM1106 486h4v1h-4zM1110 486h5v1h-5zM1115 486h2v1h-2zM1099 488h7v1h-7zM1106 488h4v1h-4zM1110 488h5v1h-5zM1115 488h2v1h-2zM1099 490h7v1h-7zM1106 490h4v1h-4zM1110 490h5v1h-5zM1115 490h2v1h-2zM1099 498h7v1h-7zM1106 498h4v1h-4zM1110 498h5v1h-5zM1115 498h6v1h-6zM1121 498h4v1h-4zM1099 500h7v1h-7zM1106 500h4v1h-4zM1110 500h5v1h-5zM1115 500h4v1h-4zM1119 500h5v1h-5zM1124 500h4v1h-4zM1099 510h7v1h-7zM1106 510h4v1h-4zM1110 510h5v1h-5zM1115 510h4v1h-4zM1099 522h7v1h-7zM1106 522h4v1h-4zM1110 522h5v1h-5zM1115 522h4v1h-4zM1099 524h7v1h-7zM1106 524h4v1h-4zM1110 524h5v1h-5zM1115 524h4v1h-4zM1099 532h7v1h-7zM1106 532h4v1h-4zM1110 532h5v1h-5zM1115 532h5v1h-5zM1099 540h7v1h-7zM1106 540h4v1h-4zM1110 540h5v1h-5zM1115 540h4v1h-4zM1119 540h4v1h-4zM1099 550h7v1h-7zM1106 550h4v1h-4zM1110 550h5v1h-5zM1115 550h8v1h-8zM1123 550h3v1h-3zM1099 554h7v1h-7zM1106 554h4v1h-4zM1110 554h5v1h-5zM1115 554h7v1h-7zM1122 554h6v1h-6zM1128 554h5v1h-5zM1099 558h7v1h-7zM1106 558h4v1h-4zM1110 558h5v1h-5zM1115 558h6v1h-6zM1121 558h4v1h-4zM1125 558h3v1h-3zM1099 562h7v1h-7zM1106 562h4v1h-4zM1110 562h5v1h-5zM1115 562h7v1h-7zM1099 566h7v1h-7zM1106 566h4v1h-4zM1110 566h5v1h-5zM1115 566h7v1h-7zM1099 580h7v1h-7zM1106 580h4v1h-4zM1110 580h5v1h-5zM1115 580h5v1h-5zM1099 582h7v1h-7zM1106 582h4v1h-4zM1110 582h5v1h-5zM1115 582h5v1h-5zM1099 584h7v1h-7zM1106 584h4v1h-4zM1110 584h5v1h-5zM1115 584h5v1h-5zM1099 594h7v1h-7zM1106 594h4v1h-4zM1110 594h5v1h-5zM1115 594h6v1h-6zM1121 594h2v1h-2z" fill="#394650"/>
<path d="M1121 103h2v1h-2zM1121 113h3v1h-3zM1131 125h7v1h-7zM1125 127h2v1h-2zM1130 131h4v1h-4zM1127 135h17v1h-17zM1121 137h18v1h-18zM1129 139h15v1h-15zM1130 141h4v1h-4zM1127 143h4v1h-4zM1122 155h3v1h-3zM1137 165h10v1h-10zM1127 169h2v1h-2zM1126 171h2v1h-2zM1130 173h2v1h-2zM1132 189h2v1h-2zM1133 191h14v1h-14zM1130 195h2v1h-2zM1136 197h4v1h-4zM1134 199h3v1h-3zM1122 203h3v1h-3zM1126 219h3v1h-3zM1126 225h3v1h-3zM1126 227h3v1h-3zM1125 229h9v1h-9zM1121 251h1v1h-1zM1124 261h2v1h-2zM1125 263h2v1h-2zM1138 273h2v1h-2zM1126 277h2v1h-2zM1121 279h1v1h-1zM1138 291h2v1h-2zM1126 295h2v1h-2zM1121 297h1v1h-1zM1119 315h1v1h-1zM1123 325h2v1h-2zM1123 329h2v1h-2zM1124 331h2v1h-2zM1119 333h2v1h-2zM1117 341h2v1h-2zM1116 351h2v1h-2zM1119 355h2v1h-2zM1124 363h2v1h-2zM1121 371h2v1h-2zM1121 373h2v1h-2zM1125 385h10v1h-10zM1118 387h2v1h-2zM1122 395h2v1h-2zM1126 399h2v1h-2zM1121 405h2v1h-2zM1119 417h4v1h-4zM1121 419h2v1h-2zM1124 423h2v1h-2zM1120 427h2v1h-2zM1126 435h2v1h-2zM1125 437h2v1h-2zM1127 441h2v1h-2zM1121 451h3v1h-3zM1123 473h2v1h-2zM1119 475h5v1h-5zM1119 477h4v1h-4zM1116 479h3v1h-3zM1116 481h3v1h-3zM1116 483h2v1h-2zM1116 485h3v1h-3zM1116 487h3v1h-3zM1116 489h2v1h-2zM1125 497h2v1h-2zM1128 499h7v1h-7zM1119 509h1v1h-1zM1119 521h2v1h-2zM1119 523h2v1h-2zM1119 531h2v1h-2zM1122 539h2v1h-2zM1125 549h2v1h-2zM1132 553h6v1h-6zM1127 557h2v1h-2zM1122 561h2v1h-2zM1121 565h1v1h-1zM1119 579h2v1h-2zM1119 581h2v1h-2zM1119 583h2v1h-2zM1122 593h8v1h-8z" fill="#767676"/>
<path d="M1121 104h2v1h-2zM1121 114h3v1h-3zM1131 126h7v1h-7zM1125 128h2v1h-2zM1130 132h4v1h-4zM1127 136h17v1h-17zM1121 138h18v1h-18zM1129 140h15v1h-15zM1130 142h4v1h-4zM1127 144h4v1h-4zM1122 156h3v1h-3zM1137 166h10v1h-10zM1127 170h2v1h-2zM1126 172h2v1h-2zM1130 174h2v1h-2zM1132 190h2v1h-2zM1133 192h14v1h-14zM1130 196h2v1h-2zM1136 198h4v1h-4zM1134 200h3v1h-3zM1122 204h3v1h-3zM1126 220h3v1h-3zM1126 226h3v1h-3zM1126 228h3v1h-3zM1125 230h9v1h-9zM1121 252h1v1h-1zM1124 262h2v1h-2zM1125 264h2v1h-2zM1138 274h2v1h-2zM1126 278h2v1h-2zM1121 280h1v1h-1zM1138 292h2v1h-2zM1126 296h2v1h-2zM1121 298h1v1h-1zM1119 316h1v1h-1zM1123 326h2v1h-2zM1123 330h2v1h-2zM1124 332h2v1h-2zM1119 334h2v1h-2zM1117 342h2v1h-2zM1116 352h2v1h-2zM1119 356h2v1h-2zM1124 364h2v1h-2zM1121 372h2v1h-2zM1121 374h2v1h-2zM1125 386h10v1h-10zM1118 388h2v1h-2zM1122 396h2v1h-2zM1126 400h2v1h-2zM1121 406h2v1h-2zM1119 418h4v1h-4zM1121 420h2v1h-2zM1124 424h2v1h-2zM1120 428h2v1h-2zM1126 436h2v1h-2zM1125 438h2v1h-2zM1127 442h2v1h-2zM1121 452h3v1h-3zM1123 474h2v1h-2zM1119 476h5v1h-5zM1119 478h4v1h-4zM1116 480h3v1h-3zM1116 482h3v1h-3zM1116 484h2v1h-2zM1116 486h3v1h-3zM1116 488h3v1h-3zM1116 490h2v1h-2zM1125 498h2v1h-2zM1128 500h7v1h-7zM1119 510h1v1h-1zM1119 522h2v1h-2zM1119 524h2v1h-2zM1119 532h2v1h-2zM1122 540h2v1h-2zM1125 550h2v1h-2zM1132 554h6v1h-6zM1127 558h2v1h-2zM1122 562h2v1h-2zM1121 566h1v1h-1zM1119 580h2v1h-2zM1119 582h2v1h-2zM1119 584h2v1h-2zM1122 594h8v1h-8z" fill="#3e3e3e"/>
</svg>

<div class="abs" style="left:1189px;top:85px;width:1px;height:518px;background:#333333"></div>

<div class="abs" style="left:1190px;top:230px;width:10px;height:2px;background:#a0a0a0"></div>
<div class="abs" style="left:321px;top:603px;width:879px;height:1px;background:#454545"></div>
<div id="p1" class="t" style="left:341px;top:616.5px;font-size:11px;color:#9d9d9d;font-family:'Liberation Sans',sans-serif;letter-spacing:-0.805px;">PROBLEMS</div>
<div id="p2" class="t" style="left:418.5px;top:616.5px;font-size:11px;color:#9d9d9d;font-family:'Liberation Sans',sans-serif;letter-spacing:-0.447px;">OUTPUT</div>
<div id="p3" class="t" style="left:483.5px;top:616.5px;font-size:11px;color:#9d9d9d;font-family:'Liberation Sans',sans-serif;letter-spacing:-0.706px;">DEBUG CONSOLE</div>
<div id="p4" class="t" style="left:593px;top:616.5px;font-size:11px;color:#e7e7e7;font-family:'Liberation Sans',sans-serif;letter-spacing:-0.375px;">TERMINAL</div>
<div class="abs" style="left:591px;top:634px;width:56px;height:1px;background:#e7e7e7"></div>
<svg style="left:926px;top:614px" width="17" height="17" viewBox="0 0 17 17">
<rect x="1.5" y="1.5" width="13.5" height="13.5" rx="1.5" fill="none" stroke="#cccccc" stroke-width="1.1"/>
<path d="M6.5 5 L9.5 8.2 L6.5 11.4" fill="none" stroke="#cccccc" stroke-width="1.2"/></svg>
<div id="pwsh" class="t" style="left:946.5px;top:614.5px;font-size:12.5px;color:#cca700;font-family:'Liberation Sans',sans-serif;letter-spacing:-0.639px;">powershell</div>
<svg style="left:1003px;top:614.5px" width="16" height="14" viewBox="0 0 16 14">
<path d="M8 1 L15 13 H1 Z" fill="none" stroke="#cca700" stroke-width="1.1" stroke-linejoin="round"/>
<path d="M8 5 V9" stroke="#cca700" stroke-width="1.4"/><rect x="7.3" y="10.2" width="1.4" height="1.4" fill="#cca700"/></svg>
<svg style="left:1029px;top:614px" width="16" height="16" viewBox="0 0 16 16">
<path d="M1 7.5 H14.5 M7.6 1 V14" stroke="#c5c5c5" stroke-width="1.2"/></svg>
<svg style="left:1048px;top:618px" width="10" height="8" viewBox="0 0 10 8">
<path d="M1 1.8 L5 5.8 L9 1.8" fill="none" stroke="#c5c5c5" stroke-width="1.1"/></svg>
<svg style="left:1069px;top:614px" width="16" height="15" viewBox="0 0 16 15">
<rect x="1.5" y="1.5" width="12.5" height="12.5" rx="1" fill="none" stroke="#c5c5c5" stroke-width="1.1"/>
<line x1="7.75" y1="1.5" x2="7.75" y2="14" stroke="#c5c5c5" stroke-width="1.1"/></svg>
<svg style="left:1094px;top:614px" width="15" height="15" viewBox="0 0 15 15">
<path d="M1.5 3.5 H13.5 M5 3.5 V1.8 H10 V3.5 M3 3.5 L3.7 13.5 H11.3 L12 3.5 M5.3 6 V11.5 M7.5 6 V11.5 M9.7 6 V11.5" fill="none" stroke="#c5c5c5" stroke-width="1.1"/></svg>
<div class="abs" style="left:1121.5px;top:621px;width:2.3px;height:2.3px;background:#c5c5c5"></div>
<div class="abs" style="left:1126.8px;top:621px;width:2.3px;height:2.3px;background:#c5c5c5"></div>
<div class="abs" style="left:1132px;top:621px;width:2.3px;height:2.3px;background:#c5c5c5"></div>
<svg style="left:1147px;top:616px" width="14" height="9" viewBox="0 0 14 9">
<path d="M1.7 7 L6.9 1.8 L12.1 7" fill="none" stroke="#c5c5c5" stroke-width="1.2"/></svg>
<svg style="left:1174px;top:616px" width="12" height="11" viewBox="0 0 12 11">
<path d="M1 0.8 L10.9 9.5 M10.9 0.8 L1 9.5" stroke="#c5c5c5" stroke-width="1.2"/></svg>
<svg style="left:1149px;top:648.5px" width="16" height="14" viewBox="0 0 16 14">
<path d="M8 1 L15 13 H1 Z" fill="none" stroke="#cccccc" stroke-width="1.1" stroke-linejoin="round"/>
<path d="M8 5 V9" stroke="#cccccc" stroke-width="1.4"/><rect x="7.3" y="10.2" width="1.4" height="1.4" fill="#cccccc"/></svg>
<div class="term" style="top:643px;left:341px">E:\lite_works\luban-lite&gt;</div>
<div class="term" style="top:660px;left:341px">E:\lite_works\luban-lite&gt;</div>
<div class="term" style="top:677px;left:341px">E:\lite_works\luban-lite&gt;</div>
<div class="term" style="top:694px;left:341px">E:\lite_works\luban-lite&gt;</div>
<div class="term" style="top:711px;left:341px">E:\lite_works\luban-lite&gt;</div>
<div class="term" style="top:728px;left:341px">E:\lite_works\luban-lite&gt;</div>
<div class="term" style="top:745px;left:341px">E:\lite_works\luban-lite&gt;</div>
<div class="term" style="top:762px;left:341px">E:\lite_works\luban-lite&gt;</div>
<div class="abs" style="left:516px;top:761px;width:7.5px;height:17px;border:1px solid #d0d0d0"></div>
<svg style="left:13px;top:783px" width="14" height="15" viewBox="0 0 14 15">
<g fill="none" stroke="#ffffff" stroke-width="1.1"><circle cx="3.5" cy="2.8" r="1.7"/><circle cx="10.3" cy="5" r="1.7"/><circle cx="3.5" cy="12.2" r="1.7"/>
<path d="M3.5 4.5 V10.5 M10.3 6.7 q0 3.5 -6.8 4"/></g></svg>
<div id="s_branch" class="t" style="left:31px;top:785px;font-size:13px;color:#ffffff;font-family:'Liberation Sans',sans-serif;letter-spacing:-0.297px;">luban-dev*</div>
<svg style="left:104px;top:783px" width="16" height="16" viewBox="0 0 16 16">
<g fill="none" stroke="#ffffff" stroke-width="1.3"><path d="M3.4 6.2 A5 5 0 0 1 12.9 7.2"/><path d="M12.6 9.8 A5 5 0 0 1 3.1 8.8"/></g>
<path d="M10.6 7 H15.4 L13 9.8 Z" fill="#ffffff"/><path d="M0.8 9 H5.6 L3.2 6.2 Z" fill="#ffffff"/></svg>
<svg style="left:135px;top:784px" width="14" height="14" viewBox="0 0 14 14">
<circle cx="6.8" cy="6.6" r="5.8" fill="none" stroke="#ffffff" stroke-width="1.1"/><path d="M4.5 4.3 L9.1 8.9 M9.1 4.3 L4.5 8.9" stroke="#ffffff" stroke-width="1.1"/></svg>
<div id="s_e0" class="t" style="left:151.5px;top:785px;font-size:13px;color:#ffffff;font-family:'Liberation Sans',sans-serif;letter-spacing:0.000px;">0</div>
<svg style="left:161.5px;top:784px" width="16" height="14" viewBox="0 0 16 14">
<path d="M8 1 L15 13 H1 Z" fill="none" stroke="#ffffff" stroke-width="1.1" stroke-linejoin="round"/>
<path d="M8 5 V9" stroke="#ffffff" stroke-width="1.4"/><rect x="7.3" y="10.2" width="1.4" height="1.4" fill="#ffffff"/></svg>
<div id="s_w0" class="t" style="left:179px;top:785px;font-size:13px;color:#ffffff;font-family:'Liberation Sans',sans-serif;letter-spacing:0.000px;">0</div>
<svg style="left:201px;top:783px" width="16" height="15" viewBox="0 0 16 15">
<path d="M13.09 6.45 L14.94 6.57 L14.94 8.43 L13.09 8.55 L12.34 10.36 L13.56 11.75 L12.25 13.06 L10.86 11.84 L9.05 12.59 L8.93 14.44 L7.07 14.44 L6.95 12.59 L5.14 11.84 L3.75 13.06 L2.44 11.75 L3.66 10.36 L2.91 8.55 L1.06 8.43 L1.06 6.57 L2.91 6.45 L3.66 4.64 L2.44 3.25 L3.75 1.94 L5.14 3.16 L6.95 2.41 L7.07 0.56 L8.93 0.56 L9.05 2.41 L10.86 3.16 L12.25 1.94 L13.56 3.25 L12.34 4.64 Z" fill="none" stroke="#ffffff" stroke-width="1.1"/><circle cx="8" cy="7.5" r="2" fill="none" stroke="#ffffff" stroke-width="1.1"/></svg>
<div id="s_setting" class="t" style="left:219.5px;top:785px;font-size:13px;color:#ffffff;font-family:'Liberation Sans',sans-serif;letter-spacing:-0.498px;">Setting</div>
<svg style="left:272px;top:784px" width="16" height="14" viewBox="0 0 16 14">
<path d="M2.3 2.5 H13.3 V11.5 H2.3 Z M2.3 5 H7.5 L8.3 4 H13.3" fill="none" stroke="#ffffff" stroke-width="1.1"/><rect x="8" y="2.5" width="5.3" height="1.5" fill="#ffffff" opacity="0.7"/></svg>
<div id="s_open" class="t" style="left:290.5px;top:785px;font-size:13px;color:#ffffff;font-family:'Liberation Sans',sans-serif;letter-spacing:-0.604px;">Open</div>
<svg style="left:335px;top:783px" width="15" height="15" viewBox="0 0 15 15">
<g stroke="#ffffff" stroke-width="1.2" fill="none"><path d="M2.5 1 V13 M7 1 V13 M11.5 1 V13"/></g>
<g fill="#ffffff"><rect x="0.8" y="8" width="3.4" height="1.6"/><rect x="5.3" y="3.5" width="3.4" height="1.6"/><rect x="9.8" y="9" width="3.4" height="1.6"/></g></svg>
<div id="s_config" class="t" style="left:352.5px;top:785px;font-size:13px;color:#ffffff;font-family:'Liberation Sans',sans-serif;letter-spacing:-0.416px;">Config</div>
<svg style="left:405px;top:784px" width="12" height="14" viewBox="0 0 12 14">
<path d="M1.3 1.2 L10 7 L1.3 12.8 Z" fill="none" stroke="#ffffff" stroke-width="1.1" stroke-linejoin="round"/></svg>
<div id="s_build" class="t" style="left:420.5px;top:785px;font-size:13px;color:#ffffff;font-family:'Liberation Sans',sans-serif;letter-spacing:-0.353px;">Build</div>
<svg style="left:463px;top:785px" width="15" height="13" viewBox="0 0 15 13">
<path d="M0.5 1 H13.5 M0.5 4.5 H13.5 M0.5 8 H8 M0.5 11.5 H8 M9.5 8 L13 11.5 M13 8 L9.5 11.5" fill="none" stroke="#ffffff" stroke-width="1.2"/></svg>
<div id="s_clean" class="t" style="left:480.5px;top:785px;font-size:13px;color:#ffffff;font-family:'Liberation Sans',sans-serif;letter-spacing:-0.742px;">Clean</div>
<svg style="left:528px;top:783px" width="12" height="16" viewBox="0 0 12 16">
<path d="M6.5 0.8 L3 7.5 L6.5 7.5 L3.5 15 L9.5 6.5 L6 6.5 L9 0.8 Z" fill="none" stroke="#ffffff" stroke-width="1.1" stroke-linejoin="round"/></svg>
<div id="s_flash" class="t" style="left:543.5px;top:785px;font-size:13px;color:#ffffff;font-family:'Liberation Sans',sans-serif;letter-spacing:-0.950px;">Flash</div>
<svg style="left:810px;top:784px" width="11" height="14" viewBox="0 0 11 14">
<g fill="none" stroke="#ffffff" stroke-width="1.1"><ellipse cx="5.5" cy="2.5" rx="4" ry="1.7"/><path d="M1.5 2.5 V11.5 a4 1.7 0 0 0 8 0 V2.5"/></g></svg>
<div id="s_ln" class="t" style="left:838.5px;top:785px;font-size:13px;color:#ffffff;font-family:'Liberation Sans',sans-serif;letter-spacing:-0.696px;">Ln 371, Col 1</div>
<div id="s_tab" class="t" style="left:922.5px;top:785px;font-size:13px;color:#ffffff;font-family:'Liberation Sans',sans-serif;letter-spacing:-0.832px;">Tab Size: 4</div>
<div id="s_utf" class="t" style="left:993px;top:785px;font-size:13px;color:#ffffff;font-family:'Liberation Sans',sans-serif;letter-spacing:-0.834px;">UTF-8</div>
<div id="s_crlf" class="t" style="left:1041px;top:785px;font-size:13px;color:#ffffff;font-family:'Liberation Sans',sans-serif;letter-spacing:-2.153px;">CRLF</div>
<div id="s_make" class="t" style="left:1083px;top:785px;font-size:13px;color:#ffffff;font-family:'Liberation Sans',sans-serif;letter-spacing:-0.344px;">Makefile</div>
<svg style="left:1143px;top:783px" width="16" height="15" viewBox="0 0 16 15">
<g fill="none" stroke="#ffffff" stroke-width="1.1"><circle cx="5.5" cy="5" r="2.5"/><path d="M1 13.5 q1 -5 4.5 -5 q3.5 0 4.5 5"/><path d="M8.5 1.5 H15 V7.5 H12.5 L10.5 9.5"/></g></svg>
<svg style="left:1174px;top:783px" width="14" height="15" viewBox="0 0 14 15">
<g fill="none" stroke="#ffffff" stroke-width="1.1"><path d="M2 11.5 H12 L11 10 V6.5 a4 4 0 0 0 -8 0 V10 Z"/><path d="M5.5 13 a1.5 1.5 0 0 0 3 0"/></g></svg>
</body></html>
